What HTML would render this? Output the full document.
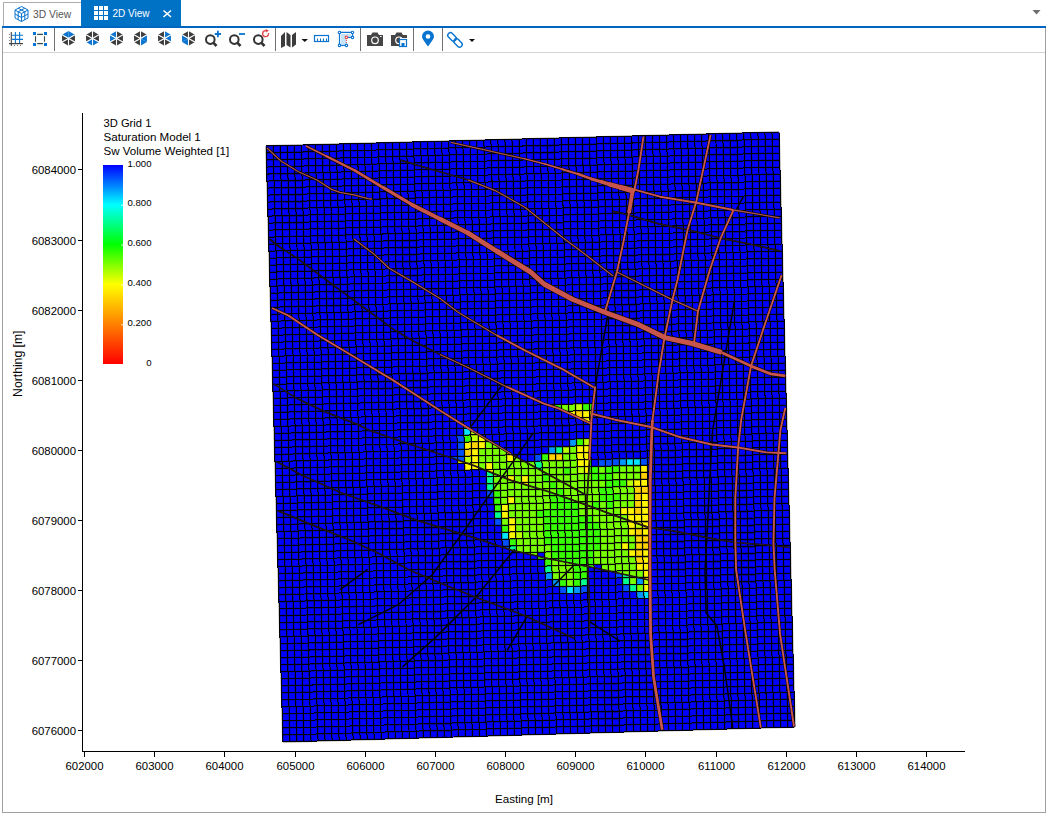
<!DOCTYPE html>
<html><head><meta charset="utf-8"><title>2D View</title>
<style>
html,body{margin:0;padding:0;background:#fff;width:1049px;height:816px;overflow:hidden;font-family:"Liberation Sans",sans-serif;}
svg{display:block}
</style></head><body>
<div style="position:relative;width:1049px;height:816px;">
<svg width="1049" height="816" style="position:absolute;left:0;top:0">
<rect x="2" y="812" width="1044" height="1" fill="#a0a0a0"/>
<rect x="2" y="28" width="1" height="785" fill="#a0a0a0"/>
<rect x="1045" y="28" width="1" height="785" fill="#a0a0a0"/>
<rect x="82" y="113" width="1" height="639" fill="#000"/>
<rect x="82" y="751" width="883" height="1" fill="#000"/>
<rect x="84" y="751" width="1" height="6" fill="#000"/>
<text x="84.5" y="770" font-family="'Liberation Sans',sans-serif" font-size="11.4" fill="#000" text-anchor="middle">602000</text>
<rect x="154" y="751" width="1" height="6" fill="#000"/>
<text x="154.5" y="770" font-family="'Liberation Sans',sans-serif" font-size="11.4" fill="#000" text-anchor="middle">603000</text>
<rect x="224" y="751" width="1" height="6" fill="#000"/>
<text x="224.5" y="770" font-family="'Liberation Sans',sans-serif" font-size="11.4" fill="#000" text-anchor="middle">604000</text>
<rect x="295" y="751" width="1" height="6" fill="#000"/>
<text x="295.5" y="770" font-family="'Liberation Sans',sans-serif" font-size="11.4" fill="#000" text-anchor="middle">605000</text>
<rect x="365" y="751" width="1" height="6" fill="#000"/>
<text x="365.5" y="770" font-family="'Liberation Sans',sans-serif" font-size="11.4" fill="#000" text-anchor="middle">606000</text>
<rect x="435" y="751" width="1" height="6" fill="#000"/>
<text x="435.5" y="770" font-family="'Liberation Sans',sans-serif" font-size="11.4" fill="#000" text-anchor="middle">607000</text>
<rect x="505" y="751" width="1" height="6" fill="#000"/>
<text x="505.5" y="770" font-family="'Liberation Sans',sans-serif" font-size="11.4" fill="#000" text-anchor="middle">608000</text>
<rect x="575" y="751" width="1" height="6" fill="#000"/>
<text x="575.5" y="770" font-family="'Liberation Sans',sans-serif" font-size="11.4" fill="#000" text-anchor="middle">609000</text>
<rect x="645" y="751" width="1" height="6" fill="#000"/>
<text x="645.5" y="770" font-family="'Liberation Sans',sans-serif" font-size="11.4" fill="#000" text-anchor="middle">610000</text>
<rect x="716" y="751" width="1" height="6" fill="#000"/>
<text x="716.5" y="770" font-family="'Liberation Sans',sans-serif" font-size="11.4" fill="#000" text-anchor="middle">611000</text>
<rect x="786" y="751" width="1" height="6" fill="#000"/>
<text x="786.5" y="770" font-family="'Liberation Sans',sans-serif" font-size="11.4" fill="#000" text-anchor="middle">612000</text>
<rect x="856" y="751" width="1" height="6" fill="#000"/>
<text x="856.5" y="770" font-family="'Liberation Sans',sans-serif" font-size="11.4" fill="#000" text-anchor="middle">613000</text>
<rect x="926" y="751" width="1" height="6" fill="#000"/>
<text x="926.5" y="770" font-family="'Liberation Sans',sans-serif" font-size="11.4" fill="#000" text-anchor="middle">614000</text>
<rect x="78" y="730" width="4" height="1" fill="#000"/>
<text x="76" y="734.5" font-family="'Liberation Sans',sans-serif" font-size="11.4" fill="#000" text-anchor="end">6076000</text>
<rect x="78" y="660" width="4" height="1" fill="#000"/>
<text x="76" y="664.5" font-family="'Liberation Sans',sans-serif" font-size="11.4" fill="#000" text-anchor="end">6077000</text>
<rect x="78" y="590" width="4" height="1" fill="#000"/>
<text x="76" y="594.5" font-family="'Liberation Sans',sans-serif" font-size="11.4" fill="#000" text-anchor="end">6078000</text>
<rect x="78" y="520" width="4" height="1" fill="#000"/>
<text x="76" y="524.5" font-family="'Liberation Sans',sans-serif" font-size="11.4" fill="#000" text-anchor="end">6079000</text>
<rect x="78" y="450" width="4" height="1" fill="#000"/>
<text x="76" y="454.5" font-family="'Liberation Sans',sans-serif" font-size="11.4" fill="#000" text-anchor="end">6080000</text>
<rect x="78" y="380" width="4" height="1" fill="#000"/>
<text x="76" y="384.5" font-family="'Liberation Sans',sans-serif" font-size="11.4" fill="#000" text-anchor="end">6081000</text>
<rect x="78" y="310" width="4" height="1" fill="#000"/>
<text x="76" y="314.5" font-family="'Liberation Sans',sans-serif" font-size="11.4" fill="#000" text-anchor="end">6082000</text>
<rect x="78" y="240" width="4" height="1" fill="#000"/>
<text x="76" y="244.5" font-family="'Liberation Sans',sans-serif" font-size="11.4" fill="#000" text-anchor="end">6083000</text>
<rect x="78" y="169" width="4" height="1" fill="#000"/>
<text x="76" y="173.5" font-family="'Liberation Sans',sans-serif" font-size="11.4" fill="#000" text-anchor="end">6084000</text>
<text x="524" y="803" font-family="'Liberation Sans',sans-serif" font-size="11.6" fill="#000" text-anchor="middle">Easting [m]</text>
<text transform="translate(22.3 363.7) rotate(-90)" x="0" y="0" font-family="'Liberation Sans',sans-serif" font-size="12.2" fill="#000" text-anchor="middle">Northing [m]</text>
<text x="103.5" y="126.5" font-family="'Liberation Sans',sans-serif" font-size="11.2" fill="#000">3D Grid 1</text>
<text x="103.5" y="140.7" font-family="'Liberation Sans',sans-serif" font-size="11.6" fill="#000">Saturation Model 1</text>
<text x="103.5" y="154.6" font-family="'Liberation Sans',sans-serif" font-size="11.55" fill="#000">Sw Volume Weighted [1]</text>
<defs><linearGradient id="cb" x1="0" y1="0" x2="0" y2="1"><stop offset="0" stop-color="#0000ff"/><stop offset="0.2" stop-color="#00ffff"/><stop offset="0.4" stop-color="#00ff00"/><stop offset="0.6" stop-color="#ffff00"/><stop offset="0.8" stop-color="#ff8000"/><stop offset="1" stop-color="#ff0000"/></linearGradient></defs>
<rect x="103" y="165" width="20" height="199" fill="url(#cb)"/>
<text x="151.5" y="166.7" font-family="'Liberation Sans',sans-serif" font-size="9.6" fill="#000" text-anchor="end">1.000</text>
<text x="151.5" y="205.7" font-family="'Liberation Sans',sans-serif" font-size="9.6" fill="#000" text-anchor="end">0.800</text>
<text x="151.5" y="245.6" font-family="'Liberation Sans',sans-serif" font-size="9.6" fill="#000" text-anchor="end">0.600</text>
<text x="151.5" y="286.0" font-family="'Liberation Sans',sans-serif" font-size="9.6" fill="#000" text-anchor="end">0.400</text>
<text x="151.5" y="326.1" font-family="'Liberation Sans',sans-serif" font-size="9.6" fill="#000" text-anchor="end">0.200</text>
<text x="151.5" y="365.9" font-family="'Liberation Sans',sans-serif" font-size="9.6" fill="#000" text-anchor="end">0</text>
<rect x="121" y="204.8" width="2" height="1" fill="#fff" opacity="0.8"/>
<rect x="121" y="244.6" width="2" height="1" fill="#fff" opacity="0.8"/>
<rect x="121" y="284.4" width="2" height="1" fill="#fff" opacity="0.8"/>
<rect x="121" y="324.2" width="2" height="1" fill="#fff" opacity="0.8"/>
</svg>
<svg width="1049" height="816" style="position:absolute;left:0;top:0">
<polygon points="266.0,146.0 779.0,132.0 795.0,727.0 283.0,742.0" fill="#0000ff"/>
<defs><clipPath id="vl"><polygon points="200.0,250.0 200.0,252.0 200.0,254.0 200.0,256.0 200.0,258.0 200.0,260.0 200.0,262.0 200.0,264.0 200.0,266.0 200.0,268.0 200.0,270.0 200.0,272.0 200.0,274.0 200.0,276.0 200.0,278.0 200.0,280.0 200.0,282.0 200.0,284.0 200.0,286.0 200.0,288.0 200.0,290.0 200.0,292.0 200.0,294.0 200.0,296.0 200.0,298.0 200.0,300.0 200.0,302.0 200.0,304.0 200.0,306.0 200.0,308.0 200.0,310.0 200.0,312.0 200.0,314.0 200.0,316.0 200.0,318.0 200.0,320.0 200.0,322.0 200.0,324.0 200.0,326.0 200.0,328.0 200.0,330.0 200.0,332.0 200.0,334.0 200.0,336.0 200.0,338.0 200.0,340.0 200.0,342.0 200.0,344.0 200.0,346.0 200.0,348.0 200.0,350.0 200.0,352.0 200.0,354.0 200.0,356.0 200.0,358.0 200.0,360.0 200.0,362.0 200.0,364.0 200.0,366.0 200.0,368.0 200.0,370.0 200.0,372.0 200.0,374.0 200.0,376.0 200.0,378.0 200.0,380.0 200.0,382.0 200.0,384.0 200.0,386.0 200.0,388.0 200.0,390.0 200.0,392.0 200.0,394.0 200.0,396.0 200.0,398.0 200.0,400.0 200.0,402.0 200.0,404.0 200.0,406.0 200.0,408.0 200.0,410.0 200.0,412.0 200.0,414.0 200.0,416.0 200.0,418.0 200.0,420.0 200.0,422.0 200.0,424.0 200.0,426.0 200.0,428.0 200.0,430.0 200.0,432.0 200.0,434.0 200.0,436.0 200.0,438.0 200.0,440.0 200.0,442.0 200.0,444.0 200.0,446.0 200.0,448.0 200.0,450.0 200.0,452.0 200.0,454.0 200.0,456.0 200.0,458.0 200.0,460.0 200.0,462.0 200.0,464.0 200.0,466.0 200.0,468.0 200.0,470.0 200.0,472.0 200.0,474.0 200.0,476.0 200.0,478.0 200.0,480.0 200.0,482.0 200.0,484.0 200.0,486.0 200.0,488.0 200.0,490.0 200.0,492.0 200.0,494.0 200.0,496.0 200.0,498.0 200.0,500.0 200.0,502.0 200.0,504.0 200.0,506.0 200.0,508.0 200.0,510.0 200.0,512.0 200.0,514.0 200.0,516.0 200.0,518.0 200.0,520.0 200.0,522.0 200.0,524.0 200.0,526.0 200.0,528.0 200.0,530.0 200.0,532.0 200.0,534.0 200.0,536.0 200.0,538.0 200.0,540.0 200.0,542.0 200.0,544.0 200.0,546.0 200.0,548.0 200.0,550.0 200.0,552.0 200.0,554.0 200.0,556.0 200.0,558.0 200.0,560.0 200.0,562.0 200.0,564.0 200.0,566.0 200.0,568.0 200.0,570.0 200.0,572.0 200.0,574.0 200.0,576.0 200.0,578.0 200.0,580.0 200.0,582.0 200.0,584.0 200.0,586.0 200.0,588.0 200.0,590.0 200.0,592.0 200.0,594.0 200.0,596.0 200.0,598.0 200.0,600.0 200.0,602.0 200.0,604.0 200.0,606.0 200.0,608.0 200.0,610.0 200.0,612.0 200.0,614.0 200.0,616.0 200.0,618.0 200.0,620.0 200.0,622.0 200.0,624.0 200.0,626.0 200.0,628.0 200.0,630.0 200.0,632.0 200.0,634.0 200.0,636.0 200.0,638.0 200.0,640.0 200.0,642.0 200.0,644.0 200.0,646.0 200.0,648.0 200.0,650.0 200.0,652.0 200.0,654.0 200.0,656.0 200.0,658.0 200.0,660.0 200.0,662.0 200.0,664.0 200.0,666.0 200.0,668.0 200.0,670.0 200.0,672.0 200.0,674.0 200.0,676.0 200.0,678.0 200.0,680.0 200.0,682.0 200.0,684.0 200.0,686.0 200.0,688.0 200.0,690.0 200.0,692.0 200.0,694.0 200.0,696.0 200.0,698.0 200.0,700.0 589.4,700.0 589.4,698.0 589.4,696.0 589.4,694.0 589.4,692.0 589.4,690.0 589.4,688.0 589.4,686.0 589.4,684.0 589.4,682.0 589.4,680.0 589.4,678.0 589.4,676.0 589.4,674.0 589.4,672.0 589.4,670.0 589.4,668.0 589.4,666.0 589.4,664.0 589.4,662.0 589.4,660.0 589.4,658.0 589.4,656.0 589.4,654.0 589.4,652.0 589.4,650.0 589.4,648.0 589.4,646.0 589.4,644.0 589.4,642.0 589.4,640.0 589.4,638.0 589.4,636.0 589.4,634.0 589.4,632.0 589.4,630.0 589.4,628.0 589.4,626.0 589.4,624.0 589.4,622.0 589.4,620.0 589.4,618.0 589.4,616.0 589.4,614.0 589.4,612.0 589.4,610.0 589.4,608.0 589.4,606.0 589.4,604.0 589.4,602.0 589.4,600.0 589.3,598.0 589.2,596.0 589.1,594.0 589.0,592.0 588.9,590.0 588.8,588.0 588.7,586.0 588.6,584.0 588.5,582.0 588.4,580.0 588.3,578.0 588.2,576.0 588.2,574.0 588.1,572.0 588.0,570.0 587.9,568.0 587.8,566.0 587.7,564.0 587.6,562.0 587.5,560.0 587.4,558.0 587.3,556.0 587.2,554.0 587.1,552.0 587.0,550.0 587.0,548.0 587.0,546.0 587.0,544.0 587.0,542.0 587.0,540.0 587.0,538.0 587.0,536.0 587.0,534.0 587.0,532.0 587.0,530.0 587.0,528.0 587.0,526.0 586.9,524.0 586.9,522.0 586.9,520.0 586.9,518.0 586.9,516.0 586.9,514.0 586.9,512.0 586.9,510.0 586.9,508.0 586.9,506.0 586.9,504.0 586.9,502.0 587.0,500.0 587.1,498.0 587.2,496.0 587.4,494.0 587.5,492.0 587.6,490.0 587.7,488.0 587.9,486.0 588.0,484.0 588.1,482.0 588.2,480.0 588.4,478.0 588.5,476.0 588.6,474.0 588.7,472.0 588.8,470.0 588.9,468.0 589.1,466.0 589.2,464.0 589.3,462.0 589.4,460.0 589.5,458.0 589.6,456.0 589.7,454.0 589.8,452.0 589.9,450.0 590.0,448.0 590.1,446.0 590.2,444.0 590.3,442.0 590.4,440.0 590.5,438.0 590.6,436.0 590.7,434.0 590.8,432.0 590.9,430.0 591.0,428.0 591.1,426.0 591.2,424.0 591.3,422.0 591.4,420.0 591.6,418.0 591.9,416.0 592.1,414.0 592.3,412.0 592.5,410.0 592.8,408.0 593.0,406.0 593.2,404.0 593.4,402.0 593.7,400.0 593.9,398.0 594.1,396.0 594.3,394.0 594.6,392.0 594.8,390.0 595.0,388.0 595.3,386.0 595.6,384.0 596.0,382.0 596.3,380.0 596.7,378.0 597.0,376.0 597.4,374.0 597.7,372.0 598.1,370.0 598.4,368.0 598.8,366.0 599.1,364.0 599.5,362.0 599.8,360.0 600.2,358.0 600.5,356.0 600.9,354.0 601.2,352.0 601.6,350.0 601.9,348.0 602.3,346.0 602.6,344.0 603.0,342.0 603.3,340.0 603.7,338.0 604.0,336.0 604.4,334.0 604.8,332.0 605.1,330.0 605.5,328.0 605.8,326.0 606.2,324.0 606.5,322.0 606.9,320.0 607.2,318.0 607.6,316.0 607.9,314.0 608.3,312.0 608.6,310.0 609.0,308.0 609.3,306.0 609.7,304.0 610.0,302.0 610.4,300.0 610.7,298.0 611.1,296.0 611.4,294.0 611.8,292.0 612.1,290.0 612.5,288.0 612.8,286.0 613.2,284.0 613.5,282.0 613.9,280.0 614.2,278.0 614.6,276.0 614.9,274.0 615.3,272.0 615.6,270.0 616.0,268.0 616.3,266.0 616.7,264.0 617.0,262.0 617.4,260.0 617.7,258.0 618.1,256.0 618.4,254.0 618.8,252.0 619.1,250.0"/></clipPath><clipPath id="vr"><polygon points="619.1,250.0 618.8,252.0 618.4,254.0 618.1,256.0 617.7,258.0 617.4,260.0 617.0,262.0 616.7,264.0 616.3,266.0 616.0,268.0 615.6,270.0 615.3,272.0 614.9,274.0 614.6,276.0 614.2,278.0 613.9,280.0 613.5,282.0 613.2,284.0 612.8,286.0 612.5,288.0 612.1,290.0 611.8,292.0 611.4,294.0 611.1,296.0 610.7,298.0 610.4,300.0 610.0,302.0 609.7,304.0 609.3,306.0 609.0,308.0 608.6,310.0 608.3,312.0 607.9,314.0 607.6,316.0 607.2,318.0 606.9,320.0 606.5,322.0 606.2,324.0 605.8,326.0 605.5,328.0 605.1,330.0 604.8,332.0 604.4,334.0 604.0,336.0 603.7,338.0 603.3,340.0 603.0,342.0 602.6,344.0 602.3,346.0 601.9,348.0 601.6,350.0 601.2,352.0 600.9,354.0 600.5,356.0 600.2,358.0 599.8,360.0 599.5,362.0 599.1,364.0 598.8,366.0 598.4,368.0 598.1,370.0 597.7,372.0 597.4,374.0 597.0,376.0 596.7,378.0 596.3,380.0 596.0,382.0 595.6,384.0 595.3,386.0 595.0,388.0 594.8,390.0 594.6,392.0 594.3,394.0 594.1,396.0 593.9,398.0 593.7,400.0 593.4,402.0 593.2,404.0 593.0,406.0 592.8,408.0 592.5,410.0 592.3,412.0 592.1,414.0 591.9,416.0 591.6,418.0 591.4,420.0 591.3,422.0 591.2,424.0 591.1,426.0 591.0,428.0 590.9,430.0 590.8,432.0 590.7,434.0 590.6,436.0 590.5,438.0 590.4,440.0 590.3,442.0 590.2,444.0 590.1,446.0 590.0,448.0 589.9,450.0 589.8,452.0 589.7,454.0 589.6,456.0 589.5,458.0 589.4,460.0 589.3,462.0 589.2,464.0 589.1,466.0 588.9,468.0 588.8,470.0 588.7,472.0 588.6,474.0 588.5,476.0 588.4,478.0 588.2,480.0 588.1,482.0 588.0,484.0 587.9,486.0 587.7,488.0 587.6,490.0 587.5,492.0 587.4,494.0 587.2,496.0 587.1,498.0 587.0,500.0 586.9,502.0 586.9,504.0 586.9,506.0 586.9,508.0 586.9,510.0 586.9,512.0 586.9,514.0 586.9,516.0 586.9,518.0 586.9,520.0 586.9,522.0 586.9,524.0 587.0,526.0 587.0,528.0 587.0,530.0 587.0,532.0 587.0,534.0 587.0,536.0 587.0,538.0 587.0,540.0 587.0,542.0 587.0,544.0 587.0,546.0 587.0,548.0 587.0,550.0 587.1,552.0 587.2,554.0 587.3,556.0 587.4,558.0 587.5,560.0 587.6,562.0 587.7,564.0 587.8,566.0 587.9,568.0 588.0,570.0 588.1,572.0 588.2,574.0 588.2,576.0 588.3,578.0 588.4,580.0 588.5,582.0 588.6,584.0 588.7,586.0 588.8,588.0 588.9,590.0 589.0,592.0 589.1,594.0 589.2,596.0 589.3,598.0 589.4,600.0 589.4,602.0 589.4,604.0 589.4,606.0 589.4,608.0 589.4,610.0 589.4,612.0 589.4,614.0 589.4,616.0 589.4,618.0 589.4,620.0 589.4,622.0 589.4,624.0 589.4,626.0 589.4,628.0 589.4,630.0 589.4,632.0 589.4,634.0 589.4,636.0 589.4,638.0 589.4,640.0 589.4,642.0 589.4,644.0 589.4,646.0 589.4,648.0 589.4,650.0 589.4,652.0 589.4,654.0 589.4,656.0 589.4,658.0 589.4,660.0 589.4,662.0 589.4,664.0 589.4,666.0 589.4,668.0 589.4,670.0 589.4,672.0 589.4,674.0 589.4,676.0 589.4,678.0 589.4,680.0 589.4,682.0 589.4,684.0 589.4,686.0 589.4,688.0 589.4,690.0 589.4,692.0 589.4,694.0 589.4,696.0 589.4,698.0 589.4,700.0 651.2,700.0 651.2,698.0 651.2,696.0 651.2,694.0 651.1,692.0 651.1,690.0 651.1,688.0 651.1,686.0 651.1,684.0 651.0,682.0 651.0,680.0 651.0,678.0 651.0,676.0 651.0,674.0 651.0,672.0 650.9,670.0 650.9,668.0 650.9,666.0 650.9,664.0 650.9,662.0 650.8,660.0 650.8,658.0 650.8,656.0 650.8,654.0 650.8,652.0 650.7,650.0 650.7,648.0 650.7,646.0 650.7,644.0 650.7,642.0 650.7,640.0 650.6,638.0 650.6,636.0 650.6,634.0 650.6,632.0 650.6,630.0 650.5,628.0 650.5,626.0 650.5,624.0 650.5,622.0 650.5,620.0 650.4,618.0 650.4,616.0 650.4,614.0 650.4,612.0 650.4,610.0 650.4,608.0 650.3,606.0 650.3,604.0 650.3,602.0 650.3,600.0 650.3,598.0 650.2,596.0 650.2,594.0 650.2,592.0 650.2,590.0 650.2,588.0 650.1,586.0 650.1,584.0 650.1,582.0 650.1,580.0 650.1,578.0 650.1,576.0 650.0,574.0 650.0,572.0 650.0,570.0 650.0,568.0 650.0,566.0 650.0,564.0 650.0,562.0 650.0,560.0 650.0,558.0 650.0,556.0 650.0,554.0 650.0,552.0 650.0,550.0 650.0,548.0 650.0,546.0 650.0,544.0 650.0,542.0 650.0,540.0 650.0,538.0 650.0,536.0 650.0,534.0 650.0,532.0 650.0,530.0 650.0,528.0 650.0,526.0 650.0,524.0 650.0,522.0 650.0,520.0 650.1,518.0 650.1,516.0 650.1,514.0 650.1,512.0 650.1,510.0 650.1,508.0 650.1,506.0 650.1,504.0 650.2,502.0 650.2,500.0 650.2,498.0 650.2,496.0 650.2,494.0 650.2,492.0 650.2,490.0 650.2,488.0 650.3,486.0 650.3,484.0 650.3,482.0 650.3,480.0 650.3,478.0 650.4,476.0 650.5,474.0 650.5,472.0 650.6,470.0 650.6,468.0 650.7,466.0 650.8,464.0 650.8,462.0 650.9,460.0 651.0,458.0 651.0,456.0 651.1,454.0 651.2,452.0 651.2,450.0 651.3,448.0 651.3,446.0 651.4,444.0 651.5,442.0 651.5,440.0 651.6,438.0 651.7,436.0 651.7,434.0 651.8,432.0 651.9,430.0 652.0,428.0 652.1,426.0 652.3,424.0 652.4,422.0 652.5,420.0 652.8,418.0 653.0,416.0 653.3,414.0 653.5,412.0 653.8,410.0 654.1,408.0 654.3,406.0 654.6,404.0 654.9,402.0 655.1,400.0 655.4,398.0 655.6,396.0 655.9,394.0 656.2,392.0 656.4,390.0 656.7,388.0 657.0,386.0 657.2,384.0 657.5,382.0 657.8,380.0 658.0,378.0 658.3,376.0 658.5,374.0 658.8,372.0 659.1,370.0 659.5,368.0 659.8,366.0 660.1,364.0 660.5,362.0 660.8,360.0 661.1,358.0 661.5,356.0 661.8,354.0 662.1,352.0 662.5,350.0 662.8,348.0 663.1,346.0 663.5,344.0 663.8,342.0 664.1,340.0 664.5,338.0 664.8,336.0 665.3,334.0 665.7,332.0 666.1,330.0 666.5,328.0 666.9,326.0 667.4,324.0 667.8,322.0 668.2,320.0 668.6,318.0 669.0,316.0 669.4,314.0 669.9,312.0 670.3,310.0 670.7,308.0 671.1,306.0 671.5,304.0 672.0,302.0 672.4,300.0 672.9,298.0 673.4,296.0 673.9,294.0 674.4,292.0 674.9,290.0 675.4,288.0 676.0,286.0 676.5,284.0 677.0,282.0 677.5,280.0 678.0,278.0 678.5,276.0 679.0,274.0 679.6,272.0 680.1,270.0 680.6,268.0 681.1,266.0 681.6,264.0 682.1,262.0 682.7,260.0 683.2,258.0 683.7,256.0 684.2,254.0 684.7,252.0 685.2,250.0"/></clipPath>
<clipPath id="b8"><polygon points="380.0,259.8 382.0,261.7 384.0,263.5 386.0,265.4 388.0,267.3 390.0,268.8 392.0,270.0 394.0,271.1 396.0,272.3 398.0,273.4 400.0,274.6 402.0,275.7 404.0,276.9 406.0,278.0 408.0,279.2 410.0,280.3 412.0,281.5 414.0,282.7 416.0,283.9 418.0,285.1 420.0,286.3 422.0,287.5 424.0,288.8 426.0,290.0 428.0,291.2 430.0,292.4 432.0,293.6 434.0,294.8 436.0,296.1 438.0,297.3 440.0,298.5 442.0,300.0 444.0,301.5 446.0,303.0 448.0,304.6 450.0,306.1 452.0,307.6 454.0,309.1 456.0,310.6 458.0,312.1 460.0,313.4 462.0,314.6 464.0,315.8 466.0,317.0 468.0,318.2 470.0,319.4 472.0,320.6 474.0,321.8 476.0,323.0 478.0,324.1 480.0,325.3 482.0,326.5 484.0,327.7 486.0,328.9 488.0,330.1 490.0,331.3 492.0,332.5 494.0,333.7 496.0,334.9 498.0,336.0 500.0,337.1 502.0,338.1 504.0,339.2 506.0,340.3 508.0,341.4 510.0,342.4 512.0,343.5 514.0,344.6 516.0,345.6 518.0,346.7 520.0,347.8 522.0,348.8 524.0,349.9 526.0,350.9 528.0,351.9 530.0,352.9 532.0,353.9 534.0,354.9 536.0,355.9 538.0,356.9 540.0,357.9 542.0,358.9 544.0,359.9 546.0,360.9 548.0,361.9 550.0,362.9 552.0,363.9 554.0,364.9 556.0,365.9 558.0,366.9 560.0,367.9 562.0,368.9 564.0,370.0 566.0,371.2 568.0,372.3 570.0,373.5 572.0,374.7 574.0,375.8 576.0,377.0 578.0,378.1 580.0,379.3 582.0,380.4 584.0,381.6 586.0,382.8 588.0,383.9 590.0,385.1 592.0,386.2 594.0,387.4 596.0,388.5 598.0,389.7 600.0,390.9 602.0,392.0 604.0,393.2 606.0,394.3 608.0,395.5 610.0,396.6 612.0,397.8 614.0,398.9 616.0,400.1 618.0,401.3 620.0,402.4 622.0,403.6 624.0,404.7 626.0,405.9 628.0,407.0 630.0,408.2 632.0,409.4 634.0,410.5 636.0,411.7 638.0,412.8 640.0,414.0 642.0,415.1 644.0,416.3 646.0,417.5 648.0,418.6 650.0,419.8 652.0,420.9 654.0,422.1 656.0,423.2 658.0,424.4 660.0,425.6 662.0,426.7 664.0,427.9 666.0,429.0 668.0,430.2 670.0,431.3 672.0,432.5 674.0,433.6 676.0,434.8 678.0,436.0 680.0,437.1 682.0,438.3 684.0,439.4 686.0,440.6 688.0,441.7 690.0,442.9 692.0,444.1 694.0,445.2 696.0,446.4 698.0,447.5 700.0,448.7 700.0,474.9 698.0,474.0 696.0,473.1 694.0,472.1 692.0,471.2 690.0,470.2 688.0,469.3 686.0,468.3 684.0,467.4 682.0,466.5 680.0,465.5 678.0,464.6 676.0,463.6 674.0,462.7 672.0,461.8 670.0,460.8 668.0,459.9 666.0,458.9 664.0,458.0 662.0,457.1 660.0,456.1 658.0,455.2 656.0,454.2 654.0,453.3 652.0,452.3 650.0,451.4 648.0,450.5 646.0,449.5 644.0,448.6 642.0,447.6 640.0,446.7 638.0,445.8 636.0,444.8 634.0,443.9 632.0,442.9 630.0,442.0 628.0,441.1 626.0,440.1 624.0,439.2 622.0,438.2 620.0,437.3 618.0,436.3 616.0,435.4 614.0,434.5 612.0,433.5 610.0,432.6 608.0,431.6 606.0,430.7 604.0,429.8 602.0,428.8 600.0,427.9 598.0,426.9 596.0,426.0 594.0,425.1 592.0,424.1 590.0,423.2 588.0,422.2 586.0,421.3 584.0,420.3 582.0,419.4 580.0,418.5 578.0,417.5 576.0,416.6 574.0,415.6 572.0,414.7 570.0,413.8 568.0,412.8 566.0,411.9 564.0,410.9 562.0,410.0 560.0,409.1 558.0,408.2 556.0,407.5 554.0,406.9 552.0,406.2 550.0,405.6 548.0,404.9 546.0,404.3 544.0,403.6 542.0,402.7 540.0,401.8 538.0,400.9 536.0,400.0 534.0,399.1 532.0,398.2 530.0,397.3 528.0,396.4 526.0,395.5 524.0,394.6 522.0,393.7 520.0,392.8 518.0,391.9 516.0,391.0 514.0,390.1 512.0,389.2 510.0,388.3 508.0,387.4 506.0,386.5 504.0,385.5 502.0,384.5 500.0,383.5 498.0,382.5 496.0,381.5 494.0,380.5 492.0,379.5 490.0,378.5 488.0,377.5 486.0,376.5 484.0,375.5 482.0,374.5 480.0,373.5 478.0,372.5 476.0,371.5 474.0,370.5 472.0,369.5 470.0,368.5 468.0,367.5 466.0,366.6 464.0,365.6 462.0,364.7 460.0,363.8 458.0,362.9 456.0,361.9 454.0,361.0 452.0,360.1 450.0,359.1 448.0,358.2 446.0,357.3 444.0,356.4 442.0,355.4 440.0,354.5 438.0,353.6 436.0,352.6 434.0,351.7 432.0,350.8 430.0,349.9 428.0,348.9 426.0,348.0 424.0,347.1 422.0,346.1 420.0,345.2 418.0,344.3 416.0,343.4 414.0,342.4 412.0,341.5 410.0,340.6 408.0,339.6 406.0,338.7 404.0,337.8 402.0,336.9 400.0,335.9 398.0,335.0 396.0,334.1 394.0,333.1 392.0,332.2 390.0,331.3 388.0,330.4 386.0,329.4 384.0,328.5 382.0,327.6 380.0,326.6"/></clipPath>
<clipPath id="b2"><polygon points="380.0,326.6 382.0,327.6 384.0,328.5 386.0,329.4 388.0,330.4 390.0,331.3 392.0,332.2 394.0,333.1 396.0,334.1 398.0,335.0 400.0,335.9 402.0,336.9 404.0,337.8 406.0,338.7 408.0,339.6 410.0,340.6 412.0,341.5 414.0,342.4 416.0,343.4 418.0,344.3 420.0,345.2 422.0,346.1 424.0,347.1 426.0,348.0 428.0,348.9 430.0,349.9 432.0,350.8 434.0,351.7 436.0,352.6 438.0,353.6 440.0,354.5 442.0,355.4 444.0,356.4 446.0,357.3 448.0,358.2 450.0,359.1 452.0,360.1 454.0,361.0 456.0,361.9 458.0,362.9 460.0,363.8 462.0,364.7 464.0,365.6 466.0,366.6 468.0,367.5 470.0,368.5 472.0,369.5 474.0,370.5 476.0,371.5 478.0,372.5 480.0,373.5 482.0,374.5 484.0,375.5 486.0,376.5 488.0,377.5 490.0,378.5 492.0,379.5 494.0,380.5 496.0,381.5 498.0,382.5 500.0,383.5 502.0,384.5 504.0,385.5 506.0,386.5 508.0,387.4 510.0,388.3 512.0,389.2 514.0,390.1 516.0,391.0 518.0,391.9 520.0,392.8 522.0,393.7 524.0,394.6 526.0,395.5 528.0,396.4 530.0,397.3 532.0,398.2 534.0,399.1 536.0,400.0 538.0,400.9 540.0,401.8 542.0,402.7 544.0,403.6 546.0,404.3 548.0,404.9 550.0,405.6 552.0,406.2 554.0,406.9 556.0,407.5 558.0,408.2 560.0,409.1 562.0,410.0 564.0,410.9 566.0,411.9 568.0,412.8 570.0,413.8 572.0,414.7 574.0,415.6 576.0,416.6 578.0,417.5 580.0,418.5 582.0,419.4 584.0,420.3 586.0,421.3 588.0,422.2 590.0,423.2 592.0,424.1 594.0,425.1 596.0,426.0 598.0,426.9 600.0,427.9 602.0,428.8 604.0,429.8 606.0,430.7 608.0,431.6 610.0,432.6 612.0,433.5 614.0,434.5 616.0,435.4 618.0,436.3 620.0,437.3 622.0,438.2 624.0,439.2 626.0,440.1 628.0,441.1 630.0,442.0 632.0,442.9 634.0,443.9 636.0,444.8 638.0,445.8 640.0,446.7 642.0,447.6 644.0,448.6 646.0,449.5 648.0,450.5 650.0,451.4 652.0,452.3 654.0,453.3 656.0,454.2 658.0,455.2 660.0,456.1 662.0,457.1 664.0,458.0 666.0,458.9 668.0,459.9 670.0,460.8 672.0,461.8 674.0,462.7 676.0,463.6 678.0,464.6 680.0,465.5 682.0,466.5 684.0,467.4 686.0,468.3 688.0,469.3 690.0,470.2 692.0,471.2 694.0,472.1 696.0,473.1 698.0,474.0 700.0,474.9 700.0,557.8 698.0,556.7 696.0,555.6 694.0,554.5 692.0,553.4 690.0,552.3 688.0,551.2 686.0,550.1 684.0,549.0 682.0,547.9 680.0,546.8 678.0,545.7 676.0,544.6 674.0,543.5 672.0,542.4 670.0,541.3 668.0,540.2 666.0,539.1 664.0,538.0 662.0,536.9 660.0,535.8 658.0,534.7 656.0,533.6 654.0,532.5 652.0,531.4 650.0,530.3 648.0,529.2 646.0,528.1 644.0,527.0 642.0,525.9 640.0,524.8 638.0,523.7 636.0,522.6 634.0,521.5 632.0,520.4 630.0,519.3 628.0,518.2 626.0,517.1 624.0,516.0 622.0,514.9 620.0,513.8 618.0,512.7 616.0,511.6 614.0,510.5 612.0,509.4 610.0,508.3 608.0,507.2 606.0,506.1 604.0,505.0 602.0,503.9 600.0,502.8 598.0,501.7 596.0,500.6 594.0,499.5 592.0,498.4 590.0,497.3 588.0,496.2 586.0,495.1 584.0,494.0 582.0,492.9 580.0,491.8 578.0,490.7 576.0,489.6 574.0,488.5 572.0,487.4 570.0,486.3 568.0,485.2 566.0,484.1 564.0,483.0 562.0,481.9 560.0,480.8 558.0,479.7 556.0,478.6 554.0,477.5 552.0,476.4 550.0,475.3 548.0,474.2 546.0,473.1 544.0,472.0 542.0,470.9 540.0,469.8 538.0,468.7 536.0,467.6 534.0,466.5 532.0,465.4 530.0,464.3 528.0,463.2 526.0,462.1 524.0,461.0 522.0,459.9 520.0,458.8 518.0,457.7 516.0,456.6 514.0,455.5 512.0,454.4 510.0,453.3 508.0,452.1 506.0,450.9 504.0,449.7 502.0,448.5 500.0,447.3 498.0,446.1 496.0,444.9 494.0,443.7 492.0,442.5 490.0,441.3 488.0,440.1 486.0,438.9 484.0,437.7 482.0,436.5 480.0,435.3 478.0,434.1 476.0,432.9 474.0,431.7 472.0,430.5 470.0,429.2 468.0,428.0 466.0,426.7 464.0,425.5 462.0,424.2 460.0,423.0 458.0,421.7 456.0,420.5 454.0,419.2 452.0,418.0 450.0,416.7 448.0,415.5 446.0,414.2 444.0,413.0 442.0,411.7 440.0,410.5 438.0,409.2 436.0,407.9 434.0,406.6 432.0,405.3 430.0,404.0 428.0,402.8 426.0,401.5 424.0,400.2 422.0,398.9 420.0,397.6 418.0,396.3 416.0,395.0 414.0,393.7 412.0,392.4 410.0,391.1 408.0,389.8 406.0,388.6 404.0,387.3 402.0,386.0 400.0,384.7 398.0,383.4 396.0,382.1 394.0,380.8 392.0,379.6 390.0,378.4 388.0,377.2 386.0,376.0 384.0,374.8 382.0,373.6 380.0,372.4"/></clipPath>
<clipPath id="b1"><polygon points="262.0,303.5 264.0,304.5 266.0,305.4 268.0,306.3 270.0,307.2 272.0,308.1 274.0,309.0 276.0,309.9 278.0,310.8 280.0,311.7 282.0,312.6 284.0,313.6 286.0,314.5 288.0,315.4 290.0,316.6 292.0,317.9 294.0,319.3 296.0,320.6 298.0,321.9 300.0,323.3 302.0,324.6 304.0,325.9 306.0,327.3 308.0,328.6 310.0,329.9 312.0,331.3 314.0,332.6 316.0,333.9 318.0,335.2 320.0,336.4 322.0,337.6 324.0,338.8 326.0,340.0 328.0,341.2 330.0,342.4 332.0,343.6 334.0,344.8 336.0,346.0 338.0,347.2 340.0,348.4 342.0,349.6 344.0,350.8 346.0,352.0 348.0,353.2 350.0,354.4 352.0,355.6 354.0,356.8 356.0,358.0 358.0,359.2 360.0,360.4 362.0,361.6 364.0,362.8 366.0,364.0 368.0,365.2 370.0,366.4 372.0,367.6 374.0,368.8 376.0,370.0 378.0,371.2 380.0,372.4 382.0,373.6 384.0,374.8 386.0,376.0 388.0,377.2 390.0,378.4 392.0,379.6 394.0,380.8 396.0,382.1 398.0,383.4 400.0,384.7 402.0,386.0 404.0,387.3 406.0,388.6 408.0,389.8 410.0,391.1 412.0,392.4 414.0,393.7 416.0,395.0 418.0,396.3 420.0,397.6 422.0,398.9 424.0,400.2 426.0,401.5 428.0,402.8 430.0,404.0 432.0,405.3 434.0,406.6 436.0,407.9 438.0,409.2 440.0,410.5 442.0,411.7 444.0,413.0 446.0,414.2 448.0,415.5 450.0,416.7 452.0,418.0 454.0,419.2 456.0,420.5 458.0,421.7 460.0,423.0 462.0,424.2 464.0,425.5 466.0,426.7 468.0,428.0 470.0,429.2 472.0,430.5 474.0,431.7 476.0,432.9 478.0,434.1 480.0,435.3 482.0,436.5 484.0,437.7 486.0,438.9 488.0,440.1 490.0,441.3 492.0,442.5 494.0,443.7 496.0,444.9 498.0,446.1 500.0,447.3 502.0,448.5 504.0,449.7 506.0,450.9 508.0,452.1 510.0,453.3 512.0,454.4 514.0,455.5 516.0,456.6 518.0,457.7 520.0,458.8 522.0,459.9 524.0,461.0 526.0,462.1 528.0,463.2 530.0,464.3 532.0,465.4 534.0,466.5 536.0,467.6 538.0,468.7 540.0,469.8 542.0,470.9 544.0,472.0 546.0,473.1 548.0,474.2 550.0,475.3 552.0,476.4 554.0,477.5 556.0,478.6 558.0,479.7 560.0,480.8 562.0,481.9 564.0,483.0 566.0,484.1 568.0,485.2 570.0,486.3 572.0,487.4 574.0,488.5 576.0,489.6 578.0,490.7 580.0,491.8 582.0,492.9 584.0,494.0 586.0,495.1 588.0,496.2 590.0,497.3 592.0,498.4 594.0,499.5 596.0,500.6 598.0,501.7 600.0,502.8 602.0,503.9 604.0,505.0 606.0,506.1 608.0,507.2 610.0,508.3 612.0,509.4 614.0,510.5 616.0,511.6 618.0,512.7 620.0,513.8 622.0,514.9 624.0,516.0 626.0,517.1 628.0,518.2 630.0,519.3 632.0,520.4 634.0,521.5 636.0,522.6 638.0,523.7 640.0,524.8 642.0,525.9 644.0,527.0 646.0,528.1 648.0,529.2 650.0,530.3 652.0,531.4 654.0,532.5 656.0,533.6 658.0,534.7 660.0,535.8 662.0,536.9 664.0,538.0 666.0,539.1 668.0,540.2 670.0,541.3 672.0,542.4 674.0,543.5 676.0,544.6 678.0,545.7 680.0,546.8 682.0,547.9 684.0,549.0 686.0,550.1 688.0,551.2 690.0,552.3 692.0,553.4 694.0,554.5 696.0,555.6 698.0,556.7 700.0,557.8 700.0,535.2 698.0,534.9 696.0,534.5 694.0,534.2 692.0,533.9 690.0,533.6 688.0,533.3 686.0,533.0 684.0,532.7 682.0,532.4 680.0,532.0 678.0,531.7 676.0,531.4 674.0,531.1 672.0,530.8 670.0,530.5 668.0,530.2 666.0,529.9 664.0,529.6 662.0,529.2 660.0,528.9 658.0,528.6 656.0,528.3 654.0,528.0 652.0,527.7 650.0,527.4 648.0,527.1 646.0,526.5 644.0,525.8 642.0,525.1 640.0,524.4 638.0,523.7 636.0,523.0 634.0,522.3 632.0,521.6 630.0,520.9 628.0,520.2 626.0,519.5 624.0,518.8 622.0,518.1 620.0,517.4 618.0,516.7 616.0,516.0 614.0,515.2 612.0,514.5 610.0,513.7 608.0,513.0 606.0,512.2 604.0,511.5 602.0,510.7 600.0,510.0 598.0,509.2 596.0,508.5 594.0,507.8 592.0,507.0 590.0,506.3 588.0,505.5 586.0,504.8 584.0,504.1 582.0,503.4 580.0,502.7 578.0,502.0 576.0,501.3 574.0,500.6 572.0,499.9 570.0,499.2 568.0,498.5 566.0,497.8 564.0,497.1 562.0,496.4 560.0,495.7 558.0,495.0 556.0,494.3 554.0,493.6 552.0,492.9 550.0,492.2 548.0,491.5 546.0,490.9 544.0,490.3 542.0,489.7 540.0,489.1 538.0,488.5 536.0,487.9 534.0,487.3 532.0,486.7 530.0,486.1 528.0,485.5 526.0,484.9 524.0,484.3 522.0,483.7 520.0,483.1 518.0,482.5 516.0,481.9 514.0,481.3 512.0,480.7 510.0,480.0 508.0,479.2 506.0,478.4 504.0,477.6 502.0,476.8 500.0,476.0 498.0,475.2 496.0,474.4 494.0,473.6 492.0,472.8 490.0,472.0 488.0,471.2 486.0,470.4 484.0,469.6 482.0,468.8 480.0,468.0 478.0,467.2 476.0,466.4 474.0,465.6 472.0,464.9 470.0,464.2 468.0,463.5 466.0,462.9 464.0,462.2 462.0,461.5 460.0,460.8 458.0,460.2 456.0,459.5 454.0,458.8 452.0,458.1 450.0,457.5 448.0,456.8 446.0,456.1 444.0,455.5 442.0,454.8 440.0,454.2 438.0,453.5 436.0,452.9 434.0,452.2 432.0,451.5 430.0,450.9 428.0,450.2 426.0,449.6 424.0,448.9 422.0,448.3 420.0,447.6 418.0,447.0 416.0,446.3 414.0,445.7 412.0,445.0 410.0,444.4 408.0,443.7 406.0,443.0 404.0,442.3 402.0,441.6 400.0,440.9 398.0,440.2 396.0,439.5 394.0,438.8 392.0,438.1 390.0,437.4 388.0,436.7 386.0,436.0 384.0,435.3 382.0,434.6 380.0,433.9 378.0,433.2 376.0,432.5 374.0,431.8 372.0,431.1 370.0,430.4 368.0,429.5 366.0,428.5 364.0,427.5 362.0,426.5 360.0,425.5 358.0,424.6 356.0,423.9 354.0,423.1 352.0,422.3 350.0,421.5 348.0,420.7 346.0,420.0 344.0,419.2 342.0,418.4 340.0,417.6 338.0,416.9 336.0,416.1 334.0,415.3 332.0,414.5 330.0,413.8 328.0,413.0 326.0,412.2 324.0,411.2 322.0,410.3 320.0,409.4 318.0,408.4 316.0,407.5 314.0,406.6 312.0,405.6 310.0,404.7 308.0,403.8 306.0,402.8 304.0,401.9 302.0,401.0 300.0,400.0 298.0,399.1 296.0,397.8 294.0,396.6 292.0,395.3 290.0,394.1 288.0,392.8 286.0,391.6 284.0,390.3 282.0,389.1 280.0,387.8 278.0,386.6 276.0,385.3 274.0,384.1 272.0,382.8 270.0,381.6 268.0,380.3 266.0,379.1 264.0,377.8 262.0,376.6"/></clipPath>
<clipPath id="b3"><polygon points="262.0,376.6 264.0,377.8 266.0,379.1 268.0,380.3 270.0,381.6 272.0,382.8 274.0,384.1 276.0,385.3 278.0,386.6 280.0,387.8 282.0,389.1 284.0,390.3 286.0,391.6 288.0,392.8 290.0,394.1 292.0,395.3 294.0,396.6 296.0,397.8 298.0,399.1 300.0,400.0 302.0,401.0 304.0,401.9 306.0,402.8 308.0,403.8 310.0,404.7 312.0,405.6 314.0,406.6 316.0,407.5 318.0,408.4 320.0,409.4 322.0,410.3 324.0,411.2 326.0,412.2 328.0,413.0 330.0,413.8 332.0,414.5 334.0,415.3 336.0,416.1 338.0,416.9 340.0,417.6 342.0,418.4 344.0,419.2 346.0,420.0 348.0,420.7 350.0,421.5 352.0,422.3 354.0,423.1 356.0,423.9 358.0,424.6 360.0,425.5 362.0,426.5 364.0,427.5 366.0,428.5 368.0,429.5 370.0,430.4 372.0,431.1 374.0,431.8 376.0,432.5 378.0,433.2 380.0,433.9 382.0,434.6 384.0,435.3 386.0,436.0 388.0,436.7 390.0,437.4 392.0,438.1 394.0,438.8 396.0,439.5 398.0,440.2 400.0,440.9 402.0,441.6 404.0,442.3 406.0,443.0 408.0,443.7 410.0,444.4 412.0,445.0 414.0,445.7 416.0,446.3 418.0,447.0 420.0,447.6 422.0,448.3 424.0,448.9 426.0,449.6 428.0,450.2 430.0,450.9 432.0,451.5 434.0,452.2 436.0,452.9 438.0,453.5 440.0,454.2 442.0,454.8 444.0,455.5 446.0,456.1 448.0,456.8 450.0,457.5 452.0,458.1 454.0,458.8 456.0,459.5 458.0,460.2 460.0,460.8 462.0,461.5 464.0,462.2 466.0,462.9 468.0,463.5 470.0,464.2 472.0,464.9 474.0,465.6 476.0,466.4 478.0,467.2 480.0,468.0 482.0,468.8 484.0,469.6 486.0,470.4 488.0,471.2 490.0,472.0 492.0,472.8 494.0,473.6 496.0,474.4 498.0,475.2 500.0,476.0 502.0,476.8 504.0,477.6 506.0,478.4 508.0,479.2 510.0,480.0 512.0,480.7 514.0,481.3 516.0,481.9 518.0,482.5 520.0,483.1 522.0,483.7 524.0,484.3 526.0,484.9 528.0,485.5 530.0,486.1 532.0,486.7 534.0,487.3 536.0,487.9 538.0,488.5 540.0,489.1 542.0,489.7 544.0,490.3 546.0,490.9 548.0,491.5 550.0,492.2 552.0,492.9 554.0,493.6 556.0,494.3 558.0,495.0 560.0,495.7 562.0,496.4 564.0,497.1 566.0,497.8 568.0,498.5 570.0,499.2 572.0,499.9 574.0,500.6 576.0,501.3 578.0,502.0 580.0,502.7 582.0,503.4 584.0,504.1 586.0,504.8 588.0,505.5 590.0,506.3 592.0,507.0 594.0,507.8 596.0,508.5 598.0,509.2 600.0,510.0 602.0,510.7 604.0,511.5 606.0,512.2 608.0,513.0 610.0,513.7 612.0,514.5 614.0,515.2 616.0,516.0 618.0,516.7 620.0,517.4 622.0,518.1 624.0,518.8 626.0,519.5 628.0,520.2 630.0,520.9 632.0,521.6 634.0,522.3 636.0,523.0 638.0,523.7 640.0,524.4 642.0,525.1 644.0,525.8 646.0,526.5 648.0,527.1 650.0,527.4 652.0,527.7 654.0,528.0 656.0,528.3 658.0,528.6 660.0,528.9 662.0,529.2 664.0,529.6 666.0,529.9 668.0,530.2 670.0,530.5 672.0,530.8 674.0,531.1 676.0,531.4 678.0,531.7 680.0,532.0 682.0,532.4 684.0,532.7 686.0,533.0 688.0,533.3 690.0,533.6 692.0,533.9 694.0,534.2 696.0,534.5 698.0,534.9 700.0,535.2 700.0,591.4 698.0,591.0 696.0,590.6 694.0,590.1 692.0,589.7 690.0,589.2 688.0,588.8 686.0,588.3 684.0,587.9 682.0,587.4 680.0,587.0 678.0,586.5 676.0,586.1 674.0,585.6 672.0,585.2 670.0,584.7 668.0,584.3 666.0,583.8 664.0,583.4 662.0,582.9 660.0,582.5 658.0,582.0 656.0,581.6 654.0,581.1 652.0,580.7 650.0,580.2 648.0,579.8 646.0,579.3 644.0,578.9 642.0,578.4 640.0,578.0 638.0,577.5 636.0,577.1 634.0,576.6 632.0,576.2 630.0,575.7 628.0,575.3 626.0,574.8 624.0,574.4 622.0,573.9 620.0,573.5 618.0,573.0 616.0,572.6 614.0,572.1 612.0,571.7 610.0,571.2 608.0,570.8 606.0,570.3 604.0,569.9 602.0,569.4 600.0,569.0 598.0,568.6 596.0,568.2 594.0,567.8 592.0,567.4 590.0,567.0 588.0,566.6 586.0,566.2 584.0,565.8 582.0,565.4 580.0,565.0 578.0,564.6 576.0,564.2 574.0,563.8 572.0,563.4 570.0,563.0 568.0,562.6 566.0,562.2 564.0,561.8 562.0,561.4 560.0,561.0 558.0,560.6 556.0,560.2 554.0,559.8 552.0,559.4 550.0,559.0 548.0,558.5 546.0,558.1 544.0,557.6 542.0,557.2 540.0,556.7 538.0,556.2 536.0,555.8 534.0,555.3 532.0,554.8 530.0,554.4 528.0,553.9 526.0,553.5 524.0,553.0 522.0,552.5 520.0,552.1 518.0,551.6 516.0,551.2 514.0,550.7 512.0,550.2 510.0,549.7 508.0,549.0 506.0,548.3 504.0,547.7 502.0,547.0 500.0,546.4 498.0,545.7 496.0,545.0 494.0,544.4 492.0,543.7 490.0,543.0 488.0,542.4 486.0,541.7 484.0,541.0 482.0,540.4 480.0,539.7 478.0,539.1 476.0,538.4 474.0,537.7 472.0,537.1 470.0,536.5 468.0,535.9 466.0,535.3 464.0,534.7 462.0,534.1 460.0,533.5 458.0,532.8 456.0,532.2 454.0,531.6 452.0,531.0 450.0,530.4 448.0,529.8 446.0,529.2 444.0,528.6 442.0,528.0 440.0,527.4 438.0,526.8 436.0,526.2 434.0,525.6 432.0,525.0 430.0,524.4 428.0,523.8 426.0,523.2 424.0,522.5 422.0,521.9 420.0,521.3 418.0,520.7 416.0,520.1 414.0,519.3 412.0,518.6 410.0,517.8 408.0,517.1 406.0,516.3 404.0,515.5 402.0,514.8 400.0,514.0 398.0,513.3 396.0,512.5 394.0,511.8 392.0,511.0 390.0,510.3 388.0,509.5 386.0,508.8 384.0,508.0 382.0,507.3 380.0,506.5 378.0,505.8 376.0,505.1 374.0,504.4 372.0,503.7 370.0,503.0 368.0,502.3 366.0,501.6 364.0,500.9 362.0,500.2 360.0,499.5 358.0,498.8 356.0,498.1 354.0,497.4 352.0,496.7 350.0,496.0 348.0,495.3 346.0,494.6 344.0,493.9 342.0,493.2 340.0,492.4 338.0,491.5 336.0,490.6 334.0,489.7 332.0,488.8 330.0,487.9 328.0,487.0 326.0,486.1 324.0,485.2 322.0,484.3 320.0,483.4 318.0,482.5 316.0,481.6 314.0,480.7 312.0,479.8 310.0,478.9 308.0,478.0 306.0,477.1 304.0,476.2 302.0,475.3 300.0,474.2 298.0,473.1 296.0,472.0 294.0,471.0 292.0,469.9 290.0,468.8 288.0,467.7 286.0,466.7 284.0,465.6 282.0,464.5 280.0,463.4 278.0,462.4 276.0,461.3 274.0,460.2 272.0,459.1 270.0,458.1 268.0,457.0 266.0,455.9 264.0,454.8 262.0,453.8"/></clipPath>
<clipPath id="b4"><polygon points="262.0,453.8 264.0,454.8 266.0,455.9 268.0,457.0 270.0,458.1 272.0,459.1 274.0,460.2 276.0,461.3 278.0,462.4 280.0,463.4 282.0,464.5 284.0,465.6 286.0,466.7 288.0,467.7 290.0,468.8 292.0,469.9 294.0,471.0 296.0,472.0 298.0,473.1 300.0,474.2 302.0,475.3 304.0,476.2 306.0,477.1 308.0,478.0 310.0,478.9 312.0,479.8 314.0,480.7 316.0,481.6 318.0,482.5 320.0,483.4 322.0,484.3 324.0,485.2 326.0,486.1 328.0,487.0 330.0,487.9 332.0,488.8 334.0,489.7 336.0,490.6 338.0,491.5 340.0,492.4 342.0,493.2 344.0,493.9 346.0,494.6 348.0,495.3 350.0,496.0 352.0,496.7 354.0,497.4 356.0,498.1 358.0,498.8 360.0,499.5 362.0,500.2 364.0,500.9 366.0,501.6 368.0,502.3 370.0,503.0 372.0,503.7 374.0,504.4 376.0,505.1 378.0,505.8 380.0,506.5 382.0,507.3 384.0,508.0 386.0,508.8 388.0,509.5 390.0,510.3 392.0,511.0 394.0,511.8 396.0,512.5 398.0,513.3 400.0,514.0 402.0,514.8 404.0,515.5 406.0,516.3 408.0,517.1 410.0,517.8 412.0,518.6 414.0,519.3 416.0,520.1 418.0,520.7 420.0,521.3 422.0,521.9 424.0,522.5 426.0,523.2 428.0,523.8 430.0,524.4 432.0,525.0 434.0,525.6 436.0,526.2 438.0,526.8 440.0,527.4 442.0,528.0 444.0,528.6 446.0,529.2 448.0,529.8 450.0,530.4 452.0,531.0 454.0,531.6 456.0,532.2 458.0,532.8 460.0,533.5 462.0,534.1 464.0,534.7 466.0,535.3 468.0,535.9 470.0,536.5 472.0,537.1 474.0,537.7 476.0,538.4 478.0,539.1 480.0,539.7 482.0,540.4 484.0,541.0 486.0,541.7 488.0,542.4 490.0,543.0 492.0,543.7 494.0,544.4 496.0,545.0 498.0,545.7 500.0,546.4 502.0,547.0 504.0,547.7 506.0,548.3 508.0,549.0 510.0,549.7 512.0,550.2 514.0,550.7 516.0,551.2 518.0,551.6 520.0,552.1 522.0,552.5 524.0,553.0 526.0,553.5 528.0,553.9 530.0,554.4 532.0,554.8 534.0,555.3 536.0,555.8 538.0,556.2 540.0,556.7 542.0,557.2 544.0,557.6 546.0,558.1 548.0,558.5 550.0,559.0 552.0,559.4 554.0,559.8 556.0,560.2 558.0,560.6 560.0,561.0 562.0,561.4 564.0,561.8 566.0,562.2 568.0,562.6 570.0,563.0 572.0,563.4 574.0,563.8 576.0,564.2 578.0,564.6 580.0,565.0 582.0,565.4 584.0,565.8 586.0,566.2 588.0,566.6 590.0,567.0 592.0,567.4 594.0,567.8 596.0,568.2 598.0,568.6 600.0,569.0 602.0,569.4 604.0,569.9 606.0,570.3 608.0,570.8 610.0,571.2 612.0,571.7 614.0,572.1 616.0,572.6 618.0,573.0 620.0,573.5 622.0,573.9 624.0,574.4 626.0,574.8 628.0,575.3 630.0,575.7 632.0,576.2 634.0,576.6 636.0,577.1 638.0,577.5 640.0,578.0 642.0,578.4 644.0,578.9 646.0,579.3 648.0,579.8 650.0,580.2 652.0,580.7 654.0,581.1 656.0,581.6 658.0,582.0 660.0,582.5 662.0,582.9 664.0,583.4 666.0,583.8 668.0,584.3 670.0,584.7 672.0,585.2 674.0,585.6 676.0,586.1 678.0,586.5 680.0,587.0 682.0,587.4 684.0,587.9 686.0,588.3 688.0,588.8 690.0,589.2 692.0,589.7 694.0,590.1 696.0,590.6 698.0,591.0 700.0,591.4 700.0,695.7 698.0,694.8 696.0,693.9 694.0,693.0 692.0,692.1 690.0,691.2 688.0,690.3 686.0,689.3 684.0,688.4 682.0,687.5 680.0,686.6 678.0,685.7 676.0,684.8 674.0,683.9 672.0,683.0 670.0,682.0 668.0,681.1 666.0,680.2 664.0,679.3 662.0,678.4 660.0,677.5 658.0,676.6 656.0,675.6 654.0,674.7 652.0,673.8 650.0,672.9 648.0,672.0 646.0,671.1 644.0,670.2 642.0,669.3 640.0,668.3 638.0,667.4 636.0,666.5 634.0,665.6 632.0,664.7 630.0,663.8 628.0,662.9 626.0,661.9 624.0,661.0 622.0,660.1 620.0,659.2 618.0,658.3 616.0,657.4 614.0,656.5 612.0,655.6 610.0,654.6 608.0,653.7 606.0,652.8 604.0,651.9 602.0,651.0 600.0,650.1 598.0,649.2 596.0,648.2 594.0,647.3 592.0,646.4 590.0,645.5 588.0,644.6 586.0,643.7 584.0,642.8 582.0,641.9 580.0,640.9 578.0,640.0 576.0,639.1 574.0,638.2 572.0,637.3 570.0,636.4 568.0,635.5 566.0,634.5 564.0,633.6 562.0,632.7 560.0,631.8 558.0,630.9 556.0,630.0 554.0,629.1 552.0,628.2 550.0,627.2 548.0,626.3 546.0,625.4 544.0,624.5 542.0,623.6 540.0,622.7 538.0,621.8 536.0,620.8 534.0,619.9 532.0,619.0 530.0,618.1 528.0,617.2 526.0,616.3 524.0,615.4 522.0,614.6 520.0,613.8 518.0,613.1 516.0,612.3 514.0,611.6 512.0,610.8 510.0,610.1 508.0,609.3 506.0,608.6 504.0,607.8 502.0,607.1 500.0,606.3 498.0,605.6 496.0,604.8 494.0,604.1 492.0,603.3 490.0,602.6 488.0,601.8 486.0,601.1 484.0,600.3 482.0,599.6 480.0,598.8 478.0,598.1 476.0,597.3 474.0,596.5 472.0,595.7 470.0,594.9 468.0,594.1 466.0,593.3 464.0,592.5 462.0,591.7 460.0,590.9 458.0,590.1 456.0,589.4 454.0,588.6 452.0,587.8 450.0,587.0 448.0,586.2 446.0,585.4 444.0,584.6 442.0,583.7 440.0,582.9 438.0,582.1 436.0,581.2 434.0,580.4 432.0,579.5 430.0,578.7 428.0,577.9 426.0,577.0 424.0,576.2 422.0,575.3 420.0,574.5 418.0,573.7 416.0,572.8 414.0,572.0 412.0,571.1 410.0,570.3 408.0,569.3 406.0,568.2 404.0,567.1 402.0,566.1 400.0,565.0 398.0,563.9 396.0,562.8 394.0,561.7 392.0,560.7 390.0,559.6 388.0,558.5 386.0,557.4 384.0,556.4 382.0,555.3 380.0,554.2 378.0,553.2 376.0,552.2 374.0,551.3 372.0,550.4 370.0,549.4 368.0,548.5 366.0,547.6 364.0,546.6 362.0,545.7 360.0,544.8 358.0,543.8 356.0,542.9 354.0,542.0 352.0,541.0 350.0,540.1 348.0,539.3 346.0,538.5 344.0,537.7 342.0,536.9 340.0,536.1 338.0,535.3 336.0,534.5 334.0,533.7 332.0,532.9 330.0,532.1 328.0,531.3 326.0,530.5 324.0,529.7 322.0,528.9 320.0,528.1 318.0,527.3 316.0,526.5 314.0,525.7 312.0,524.9 310.0,524.1 308.0,523.2 306.0,522.4 304.0,521.6 302.0,520.7 300.0,519.9 298.0,519.1 296.0,518.2 294.0,517.4 292.0,516.6 290.0,515.8 288.0,514.9 286.0,514.1 284.0,513.3 282.0,512.4 280.0,511.6 278.0,510.8 276.0,509.9 274.0,509.1 272.0,508.3 270.0,507.5 268.0,506.6 266.0,505.8 264.0,505.0 262.0,504.1"/></clipPath>
<clipPath id="b5"><polygon points="380.0,359.9 382.0,360.4 384.0,360.9 386.0,361.4 388.0,361.9 390.0,362.4 392.0,363.0 394.0,363.5 396.0,364.0 398.0,364.5 400.0,365.0 402.0,365.5 404.0,366.0 406.0,366.5 408.0,367.0 410.0,367.5 412.0,368.0 414.0,368.6 416.0,369.1 418.0,369.6 420.0,370.1 422.0,370.6 424.0,371.1 426.0,371.6 428.0,372.1 430.0,372.6 432.0,373.1 434.0,373.6 436.0,374.2 438.0,374.7 440.0,375.2 442.0,375.7 444.0,376.2 446.0,376.7 448.0,377.2 450.0,377.7 452.0,378.2 454.0,378.7 456.0,379.2 458.0,379.7 460.0,380.3 462.0,380.8 464.0,381.3 466.0,381.8 468.0,382.3 470.0,382.8 472.0,383.3 474.0,383.8 476.0,384.3 478.0,384.8 480.0,385.3 482.0,385.9 484.0,386.4 486.0,386.9 488.0,387.4 490.0,387.9 492.0,388.4 494.0,388.9 496.0,389.4 498.0,389.9 500.0,390.4 502.0,390.9 504.0,391.5 506.0,392.0 508.0,392.5 510.0,393.0 512.0,393.5 514.0,394.0 516.0,394.5 518.0,395.0 520.0,395.5 522.0,396.0 524.0,396.5 526.0,397.1 528.0,397.6 530.0,398.1 532.0,398.6 534.0,399.1 536.0,399.6 538.0,400.1 540.0,400.6 542.0,401.1 544.0,401.6 546.0,402.1 548.0,402.7 550.0,403.2 552.0,403.7 554.0,404.2 556.0,404.7 558.0,405.2 560.0,405.7 562.0,406.2 564.0,406.7 566.0,407.2 568.0,407.7 570.0,408.2 572.0,408.8 574.0,409.3 576.0,409.8 578.0,410.3 580.0,410.8 582.0,411.3 584.0,411.8 586.0,412.3 588.0,412.8 590.0,413.3 592.0,413.8 594.0,414.4 596.0,414.9 598.0,415.4 600.0,415.9 602.0,416.4 604.0,416.9 606.0,417.4 608.0,417.9 610.0,418.4 612.0,418.9 614.0,419.4 616.0,419.9 618.0,420.3 620.0,420.7 622.0,421.1 624.0,421.5 626.0,421.9 628.0,422.3 630.0,422.7 632.0,423.1 634.0,423.6 636.0,424.0 638.0,424.4 640.0,424.8 642.0,425.2 644.0,425.6 646.0,426.0 648.0,426.4 650.0,426.8 652.0,427.4 654.0,428.1 656.0,428.8 658.0,429.5 660.0,430.2 662.0,430.9 664.0,431.6 666.0,432.3 668.0,433.0 670.0,433.7 672.0,434.4 674.0,435.1 676.0,435.9 678.0,436.6 680.0,437.3 682.0,438.0 684.0,438.7 686.0,439.4 688.0,440.1 690.0,440.8 692.0,441.5 694.0,442.2 696.0,442.9 698.0,443.6 700.0,444.3 700.0,535.2 698.0,534.9 696.0,534.5 694.0,534.2 692.0,533.9 690.0,533.6 688.0,533.3 686.0,533.0 684.0,532.7 682.0,532.4 680.0,532.0 678.0,531.7 676.0,531.4 674.0,531.1 672.0,530.8 670.0,530.5 668.0,530.2 666.0,529.9 664.0,529.6 662.0,529.2 660.0,528.9 658.0,528.6 656.0,528.3 654.0,528.0 652.0,527.7 650.0,527.4 648.0,527.1 646.0,526.5 644.0,525.8 642.0,525.1 640.0,524.4 638.0,523.7 636.0,523.0 634.0,522.3 632.0,521.6 630.0,520.9 628.0,520.2 626.0,519.5 624.0,518.8 622.0,518.1 620.0,517.4 618.0,516.7 616.0,516.0 614.0,515.2 612.0,514.5 610.0,513.7 608.0,513.0 606.0,512.2 604.0,511.5 602.0,510.7 600.0,510.0 598.0,509.2 596.0,508.5 594.0,507.8 592.0,507.0 590.0,506.3 588.0,505.5 586.0,504.8 584.0,504.1 582.0,503.4 580.0,502.7 578.0,502.0 576.0,501.3 574.0,500.6 572.0,499.9 570.0,499.2 568.0,498.5 566.0,497.8 564.0,497.1 562.0,496.4 560.0,495.7 558.0,495.0 556.0,494.3 554.0,493.6 552.0,492.9 550.0,492.2 548.0,491.5 546.0,490.9 544.0,490.3 542.0,489.7 540.0,489.1 538.0,488.5 536.0,487.9 534.0,487.3 532.0,486.7 530.0,486.1 528.0,485.5 526.0,484.9 524.0,484.3 522.0,483.7 520.0,483.1 518.0,482.5 516.0,481.9 514.0,481.3 512.0,480.7 510.0,480.0 508.0,479.2 506.0,478.4 504.0,477.6 502.0,476.8 500.0,476.0 498.0,475.2 496.0,474.4 494.0,473.6 492.0,472.8 490.0,472.0 488.0,471.2 486.0,470.4 484.0,469.6 482.0,468.8 480.0,468.0 478.0,467.2 476.0,466.4 474.0,465.6 472.0,464.9 470.0,464.2 468.0,463.5 466.0,462.9 464.0,462.2 462.0,461.5 460.0,460.8 458.0,460.2 456.0,459.5 454.0,458.8 452.0,458.1 450.0,457.5 448.0,456.8 446.0,456.1 444.0,455.5 442.0,454.8 440.0,454.2 438.0,453.5 436.0,452.9 434.0,452.2 432.0,451.5 430.0,450.9 428.0,450.2 426.0,449.6 424.0,448.9 422.0,448.3 420.0,447.6 418.0,447.0 416.0,446.3 414.0,445.7 412.0,445.0 410.0,444.4 408.0,443.7 406.0,443.0 404.0,442.3 402.0,441.6 400.0,440.9 398.0,440.2 396.0,439.5 394.0,438.8 392.0,438.1 390.0,437.4 388.0,436.7 386.0,436.0 384.0,435.3 382.0,434.6 380.0,433.9"/></clipPath>
<clipPath id="b6"><polygon points="380.0,433.9 382.0,434.6 384.0,435.3 386.0,436.0 388.0,436.7 390.0,437.4 392.0,438.1 394.0,438.8 396.0,439.5 398.0,440.2 400.0,440.9 402.0,441.6 404.0,442.3 406.0,443.0 408.0,443.7 410.0,444.4 412.0,445.0 414.0,445.7 416.0,446.3 418.0,447.0 420.0,447.6 422.0,448.3 424.0,448.9 426.0,449.6 428.0,450.2 430.0,450.9 432.0,451.5 434.0,452.2 436.0,452.9 438.0,453.5 440.0,454.2 442.0,454.8 444.0,455.5 446.0,456.1 448.0,456.8 450.0,457.5 452.0,458.1 454.0,458.8 456.0,459.5 458.0,460.2 460.0,460.8 462.0,461.5 464.0,462.2 466.0,462.9 468.0,463.5 470.0,464.2 472.0,464.9 474.0,465.6 476.0,466.4 478.0,467.2 480.0,468.0 482.0,468.8 484.0,469.6 486.0,470.4 488.0,471.2 490.0,472.0 492.0,472.8 494.0,473.6 496.0,474.4 498.0,475.2 500.0,476.0 502.0,476.8 504.0,477.6 506.0,478.4 508.0,479.2 510.0,480.0 512.0,480.7 514.0,481.3 516.0,481.9 518.0,482.5 520.0,483.1 522.0,483.7 524.0,484.3 526.0,484.9 528.0,485.5 530.0,486.1 532.0,486.7 534.0,487.3 536.0,487.9 538.0,488.5 540.0,489.1 542.0,489.7 544.0,490.3 546.0,490.9 548.0,491.5 550.0,492.2 552.0,492.9 554.0,493.6 556.0,494.3 558.0,495.0 560.0,495.7 562.0,496.4 564.0,497.1 566.0,497.8 568.0,498.5 570.0,499.2 572.0,499.9 574.0,500.6 576.0,501.3 578.0,502.0 580.0,502.7 582.0,503.4 584.0,504.1 586.0,504.8 588.0,505.5 590.0,506.3 592.0,507.0 594.0,507.8 596.0,508.5 598.0,509.2 600.0,510.0 602.0,510.7 604.0,511.5 606.0,512.2 608.0,513.0 610.0,513.7 612.0,514.5 614.0,515.2 616.0,516.0 618.0,516.7 620.0,517.4 622.0,518.1 624.0,518.8 626.0,519.5 628.0,520.2 630.0,520.9 632.0,521.6 634.0,522.3 636.0,523.0 638.0,523.7 640.0,524.4 642.0,525.1 644.0,525.8 646.0,526.5 648.0,527.1 650.0,527.4 652.0,527.7 654.0,528.0 656.0,528.3 658.0,528.6 660.0,528.9 662.0,529.2 664.0,529.6 666.0,529.9 668.0,530.2 670.0,530.5 672.0,530.8 674.0,531.1 676.0,531.4 678.0,531.7 680.0,532.0 682.0,532.4 684.0,532.7 686.0,533.0 688.0,533.3 690.0,533.6 692.0,533.9 694.0,534.2 696.0,534.5 698.0,534.9 700.0,535.2 700.0,591.4 698.0,591.0 696.0,590.6 694.0,590.1 692.0,589.7 690.0,589.2 688.0,588.8 686.0,588.3 684.0,587.9 682.0,587.4 680.0,587.0 678.0,586.5 676.0,586.1 674.0,585.6 672.0,585.2 670.0,584.7 668.0,584.3 666.0,583.8 664.0,583.4 662.0,582.9 660.0,582.5 658.0,582.0 656.0,581.6 654.0,581.1 652.0,580.7 650.0,580.2 648.0,579.8 646.0,579.3 644.0,578.9 642.0,578.4 640.0,578.0 638.0,577.5 636.0,577.1 634.0,576.6 632.0,576.2 630.0,575.7 628.0,575.3 626.0,574.8 624.0,574.4 622.0,573.9 620.0,573.5 618.0,573.0 616.0,572.6 614.0,572.1 612.0,571.7 610.0,571.2 608.0,570.8 606.0,570.3 604.0,569.9 602.0,569.4 600.0,569.0 598.0,568.6 596.0,568.2 594.0,567.8 592.0,567.4 590.0,567.0 588.0,566.6 586.0,566.2 584.0,565.8 582.0,565.4 580.0,565.0 578.0,564.6 576.0,564.2 574.0,563.8 572.0,563.4 570.0,563.0 568.0,562.6 566.0,562.2 564.0,561.8 562.0,561.4 560.0,561.0 558.0,560.6 556.0,560.2 554.0,559.8 552.0,559.4 550.0,559.0 548.0,558.5 546.0,558.1 544.0,557.6 542.0,557.2 540.0,556.7 538.0,556.2 536.0,555.8 534.0,555.3 532.0,554.8 530.0,554.4 528.0,553.9 526.0,553.5 524.0,553.0 522.0,552.5 520.0,552.1 518.0,551.6 516.0,551.2 514.0,550.7 512.0,550.2 510.0,549.7 508.0,549.0 506.0,548.3 504.0,547.7 502.0,547.0 500.0,546.4 498.0,545.7 496.0,545.0 494.0,544.4 492.0,543.7 490.0,543.0 488.0,542.4 486.0,541.7 484.0,541.0 482.0,540.4 480.0,539.7 478.0,539.1 476.0,538.4 474.0,537.7 472.0,537.1 470.0,536.5 468.0,535.9 466.0,535.3 464.0,534.7 462.0,534.1 460.0,533.5 458.0,532.8 456.0,532.2 454.0,531.6 452.0,531.0 450.0,530.4 448.0,529.8 446.0,529.2 444.0,528.6 442.0,528.0 440.0,527.4 438.0,526.8 436.0,526.2 434.0,525.6 432.0,525.0 430.0,524.4 428.0,523.8 426.0,523.2 424.0,522.5 422.0,521.9 420.0,521.3 418.0,520.7 416.0,520.1 414.0,519.3 412.0,518.6 410.0,517.8 408.0,517.1 406.0,516.3 404.0,515.5 402.0,514.8 400.0,514.0 398.0,513.3 396.0,512.5 394.0,511.8 392.0,511.0 390.0,510.3 388.0,509.5 386.0,508.8 384.0,508.0 382.0,507.3 380.0,506.5"/></clipPath>
<clipPath id="b7"><polygon points="380.0,506.5 382.0,507.3 384.0,508.0 386.0,508.8 388.0,509.5 390.0,510.3 392.0,511.0 394.0,511.8 396.0,512.5 398.0,513.3 400.0,514.0 402.0,514.8 404.0,515.5 406.0,516.3 408.0,517.1 410.0,517.8 412.0,518.6 414.0,519.3 416.0,520.1 418.0,520.7 420.0,521.3 422.0,521.9 424.0,522.5 426.0,523.2 428.0,523.8 430.0,524.4 432.0,525.0 434.0,525.6 436.0,526.2 438.0,526.8 440.0,527.4 442.0,528.0 444.0,528.6 446.0,529.2 448.0,529.8 450.0,530.4 452.0,531.0 454.0,531.6 456.0,532.2 458.0,532.8 460.0,533.5 462.0,534.1 464.0,534.7 466.0,535.3 468.0,535.9 470.0,536.5 472.0,537.1 474.0,537.7 476.0,538.4 478.0,539.1 480.0,539.7 482.0,540.4 484.0,541.0 486.0,541.7 488.0,542.4 490.0,543.0 492.0,543.7 494.0,544.4 496.0,545.0 498.0,545.7 500.0,546.4 502.0,547.0 504.0,547.7 506.0,548.3 508.0,549.0 510.0,549.7 512.0,550.2 514.0,550.7 516.0,551.2 518.0,551.6 520.0,552.1 522.0,552.5 524.0,553.0 526.0,553.5 528.0,553.9 530.0,554.4 532.0,554.8 534.0,555.3 536.0,555.8 538.0,556.2 540.0,556.7 542.0,557.2 544.0,557.6 546.0,558.1 548.0,558.5 550.0,559.0 552.0,559.4 554.0,559.8 556.0,560.2 558.0,560.6 560.0,561.0 562.0,561.4 564.0,561.8 566.0,562.2 568.0,562.6 570.0,563.0 572.0,563.4 574.0,563.8 576.0,564.2 578.0,564.6 580.0,565.0 582.0,565.4 584.0,565.8 586.0,566.2 588.0,566.6 590.0,567.0 592.0,567.4 594.0,567.8 596.0,568.2 598.0,568.6 600.0,569.0 602.0,569.4 604.0,569.9 606.0,570.3 608.0,570.8 610.0,571.2 612.0,571.7 614.0,572.1 616.0,572.6 618.0,573.0 620.0,573.5 622.0,573.9 624.0,574.4 626.0,574.8 628.0,575.3 630.0,575.7 632.0,576.2 634.0,576.6 636.0,577.1 638.0,577.5 640.0,578.0 642.0,578.4 644.0,578.9 646.0,579.3 648.0,579.8 650.0,580.2 652.0,580.7 654.0,581.1 656.0,581.6 658.0,582.0 660.0,582.5 662.0,582.9 664.0,583.4 666.0,583.8 668.0,584.3 670.0,584.7 672.0,585.2 674.0,585.6 676.0,586.1 678.0,586.5 680.0,587.0 682.0,587.4 684.0,587.9 686.0,588.3 688.0,588.8 690.0,589.2 692.0,589.7 694.0,590.1 696.0,590.6 698.0,591.0 700.0,591.4 700.0,660.0 698.0,660.0 696.0,660.0 694.0,660.0 692.0,660.0 690.0,660.0 688.0,660.0 686.0,660.0 684.0,660.0 682.0,660.0 680.0,660.0 678.0,660.0 676.0,660.0 674.0,660.0 672.0,660.0 670.0,660.0 668.0,660.0 666.0,660.0 664.0,660.0 662.0,660.0 660.0,660.0 658.0,660.0 656.0,660.0 654.0,660.0 652.0,660.0 650.0,660.0 648.0,660.0 646.0,660.0 644.0,660.0 642.0,660.0 640.0,660.0 638.0,660.0 636.0,660.0 634.0,660.0 632.0,660.0 630.0,660.0 628.0,660.0 626.0,660.0 624.0,660.0 622.0,660.0 620.0,660.0 618.0,660.0 616.0,660.0 614.0,660.0 612.0,660.0 610.0,660.0 608.0,660.0 606.0,660.0 604.0,660.0 602.0,660.0 600.0,660.0 598.0,660.0 596.0,660.0 594.0,660.0 592.0,660.0 590.0,660.0 588.0,660.0 586.0,660.0 584.0,660.0 582.0,660.0 580.0,660.0 578.0,660.0 576.0,660.0 574.0,660.0 572.0,660.0 570.0,660.0 568.0,660.0 566.0,660.0 564.0,660.0 562.0,660.0 560.0,660.0 558.0,660.0 556.0,660.0 554.0,660.0 552.0,660.0 550.0,660.0 548.0,660.0 546.0,660.0 544.0,660.0 542.0,660.0 540.0,660.0 538.0,660.0 536.0,660.0 534.0,660.0 532.0,660.0 530.0,660.0 528.0,660.0 526.0,660.0 524.0,660.0 522.0,660.0 520.0,660.0 518.0,660.0 516.0,660.0 514.0,660.0 512.0,660.0 510.0,660.0 508.0,660.0 506.0,660.0 504.0,660.0 502.0,660.0 500.0,660.0 498.0,660.0 496.0,660.0 494.0,660.0 492.0,660.0 490.0,660.0 488.0,660.0 486.0,660.0 484.0,660.0 482.0,660.0 480.0,660.0 478.0,660.0 476.0,660.0 474.0,660.0 472.0,660.0 470.0,660.0 468.0,660.0 466.0,660.0 464.0,660.0 462.0,660.0 460.0,660.0 458.0,660.0 456.0,660.0 454.0,660.0 452.0,660.0 450.0,660.0 448.0,660.0 446.0,660.0 444.0,660.0 442.0,660.0 440.0,660.0 438.0,660.0 436.0,660.0 434.0,660.0 432.0,660.0 430.0,660.0 428.0,660.0 426.0,660.0 424.0,660.0 422.0,660.0 420.0,660.0 418.0,660.0 416.0,660.0 414.0,660.0 412.0,660.0 410.0,660.0 408.0,660.0 406.0,660.0 404.0,660.0 402.0,660.0 400.0,660.0 398.0,660.0 396.0,660.0 394.0,660.0 392.0,660.0 390.0,660.0 388.0,660.0 386.0,660.0 384.0,660.0 382.0,660.0 380.0,660.0"/></clipPath>
</defs>
<g clip-path="url(#vl)"><g clip-path="url(#b8)"><polygon points="547.4,404.7 554.5,404.5 554.6,411.5 547.6,411.7" fill="#38ff00"/><polygon points="554.5,404.5 561.5,404.3 561.7,411.3 554.6,411.5" fill="#38ff00"/><polygon points="561.5,404.3 568.5,404.1 568.7,411.1 561.7,411.3" fill="#78ff00"/><polygon points="561.7,411.3 568.7,411.1 568.9,418.1 561.9,418.3" fill="#78ff00"/><polygon points="568.5,404.1 575.5,403.9 575.7,410.9 568.7,411.1" fill="#78ff00"/><polygon points="568.7,411.1 575.7,410.9 575.9,417.9 568.9,418.1" fill="#fff500"/><polygon points="575.5,403.9 582.5,403.7 582.7,410.7 575.7,410.9" fill="#beff00"/><polygon points="575.7,410.9 582.7,410.7 582.9,417.7 575.9,417.9" fill="#ffd200"/><polygon points="575.9,417.9 582.9,417.7 583.1,424.8 576.1,425.0" fill="#ffd200"/><polygon points="582.5,403.7 589.6,403.5 589.8,410.5 582.7,410.7" fill="#38ff00"/><polygon points="582.7,410.7 589.8,410.5 589.9,417.6 582.9,417.7" fill="#fff500"/><polygon points="582.9,417.7 589.9,417.6 590.1,424.6 583.1,424.8" fill="#fff500"/><polygon points="589.6,403.5 596.6,403.3 596.8,410.3 589.8,410.5" fill="#38ff00"/><polygon points="589.8,410.5 596.8,410.3 597.0,417.4 589.9,417.6" fill="#fff500"/><polygon points="589.9,417.6 597.0,417.4 597.2,424.4 590.1,424.6" fill="#fff500"/></g></g>
<g clip-path="url(#vl)"><g clip-path="url(#b2)"><polygon points="520.9,461.6 527.9,461.4 528.1,468.4 521.1,468.6" fill="#78ff00"/><polygon points="527.9,461.4 534.9,461.2 535.1,468.2 528.1,468.4" fill="#78ff00"/><polygon points="534.7,454.2 541.8,454.0 542.0,461.0 534.9,461.2" fill="#0050ff"/><polygon points="534.9,461.2 542.0,461.0 542.2,468.0 535.1,468.2" fill="#00ff8c"/><polygon points="535.1,468.2 542.2,468.0 542.3,475.0 535.3,475.2" fill="#00ff8c"/><polygon points="541.8,454.0 548.8,453.8 549.0,460.8 542.0,461.0" fill="#38ff00"/><polygon points="542.0,461.0 549.0,460.8 549.2,467.8 542.2,468.0" fill="#78ff00"/><polygon points="542.2,468.0 549.2,467.8 549.4,474.8 542.3,475.0" fill="#78ff00"/><polygon points="548.6,446.8 555.6,446.6 555.8,453.6 548.8,453.8" fill="#0096ff"/><polygon points="548.8,453.8 555.8,453.6 556.0,460.6 549.0,460.8" fill="#ffd200"/><polygon points="549.0,460.8 556.0,460.6 556.2,467.6 549.2,467.8" fill="#78ff00"/><polygon points="549.2,467.8 556.2,467.6 556.4,474.6 549.4,474.8" fill="#78ff00"/><polygon points="549.4,474.8 556.4,474.6 556.6,481.6 549.6,481.8" fill="#78ff00"/><polygon points="555.6,446.6 562.6,446.4 562.8,453.4 555.8,453.6" fill="#00ff8c"/><polygon points="555.8,453.6 562.8,453.4 563.0,460.4 556.0,460.6" fill="#ffd200"/><polygon points="556.0,460.6 563.0,460.4 563.2,467.4 556.2,467.6" fill="#78ff00"/><polygon points="556.2,467.6 563.2,467.4 563.4,474.4 556.4,474.6" fill="#78ff00"/><polygon points="556.4,474.6 563.4,474.4 563.6,481.4 556.6,481.6" fill="#78ff00"/><polygon points="556.6,481.6 563.6,481.4 563.8,488.4 556.8,488.6" fill="#78ff00"/><polygon points="562.6,446.4 569.7,446.2 569.8,453.2 562.8,453.4" fill="#beff00"/><polygon points="562.8,453.4 569.8,453.2 570.0,460.2 563.0,460.4" fill="#78ff00"/><polygon points="563.0,460.4 570.0,460.2 570.2,467.2 563.2,467.4" fill="#78ff00"/><polygon points="563.2,467.4 570.2,467.2 570.4,474.2 563.4,474.4" fill="#38ff00"/><polygon points="563.4,474.4 570.4,474.2 570.6,481.2 563.6,481.4" fill="#78ff00"/><polygon points="563.6,481.4 570.6,481.2 570.8,488.2 563.8,488.4" fill="#78ff00"/><polygon points="569.5,439.2 576.5,439.0 576.7,446.0 569.7,446.2" fill="#0096ff"/><polygon points="569.7,446.2 576.7,446.0 576.9,453.0 569.8,453.2" fill="#78ff00"/><polygon points="569.8,453.2 576.9,453.0 577.1,460.0 570.0,460.2" fill="#78ff00"/><polygon points="570.0,460.2 577.1,460.0 577.3,467.0 570.2,467.2" fill="#78ff00"/><polygon points="570.2,467.2 577.3,467.0 577.4,474.0 570.4,474.2" fill="#78ff00"/><polygon points="570.4,474.2 577.4,474.0 577.6,481.0 570.6,481.2" fill="#78ff00"/><polygon points="570.6,481.2 577.6,481.0 577.8,488.0 570.8,488.2" fill="#78ff00"/><polygon points="570.8,488.2 577.8,488.0 578.0,495.0 571.0,495.2" fill="#78ff00"/><polygon points="576.5,439.0 583.5,438.8 583.7,445.8 576.7,446.0" fill="#38ff00"/><polygon points="576.7,446.0 583.7,445.8 583.9,452.8 576.9,453.0" fill="#fff500"/><polygon points="576.9,453.0 583.9,452.8 584.1,459.8 577.1,460.0" fill="#fff500"/><polygon points="577.1,460.0 584.1,459.8 584.3,466.8 577.3,467.0" fill="#fff500"/><polygon points="577.3,467.0 584.3,466.8 584.5,473.8 577.4,474.0" fill="#beff00"/><polygon points="577.4,474.0 584.5,473.8 584.7,480.8 577.6,481.0" fill="#78ff00"/><polygon points="577.6,481.0 584.7,480.8 584.9,487.8 577.8,488.0" fill="#78ff00"/><polygon points="577.8,488.0 584.9,487.8 585.0,494.8 578.0,495.0" fill="#78ff00"/><polygon points="583.5,438.8 590.5,438.6 590.7,445.6 583.7,445.8" fill="#beff00"/><polygon points="583.7,445.8 590.7,445.6 590.9,452.6 583.9,452.8" fill="#fff500"/><polygon points="583.9,452.8 590.9,452.6 591.1,459.6 584.1,459.8" fill="#fff500"/><polygon points="584.1,459.8 591.1,459.6 591.3,466.6 584.3,466.8" fill="#fff500"/><polygon points="584.3,466.8 591.3,466.6 591.5,473.6 584.5,473.8" fill="#fff500"/><polygon points="584.5,473.8 591.5,473.6 591.7,480.6 584.7,480.8" fill="#78ff00"/><polygon points="584.7,480.8 591.7,480.6 591.9,487.6 584.9,487.8" fill="#78ff00"/><polygon points="584.9,487.8 591.9,487.6 592.1,494.6 585.0,494.8" fill="#78ff00"/></g></g>
<g clip-path="url(#vl)"><g clip-path="url(#b1)"><polygon points="450.5,456.6 457.5,456.4 457.7,463.4 450.7,463.6" fill="#0050ff"/><polygon points="456.9,435.3 464.0,435.1 464.2,442.1 457.1,442.3" fill="#0050ff"/><polygon points="457.1,442.3 464.2,442.1 464.3,449.1 457.3,449.3" fill="#0050ff"/><polygon points="457.3,449.3 464.3,449.1 464.5,456.2 457.5,456.4" fill="#0050ff"/><polygon points="457.5,456.4 464.5,456.2 464.7,463.2 457.7,463.4" fill="#0050ff"/><polygon points="463.6,421.1 470.6,420.9 470.8,427.9 463.8,428.1" fill="#00e6ff"/><polygon points="463.8,428.1 470.8,427.9 471.0,434.9 464.0,435.1" fill="#00e6ff"/><polygon points="464.0,435.1 471.0,434.9 471.2,441.9 464.2,442.1" fill="#38ff00"/><polygon points="464.2,442.1 471.2,441.9 471.4,448.9 464.3,449.1" fill="#fff500"/><polygon points="464.3,449.1 471.4,448.9 471.6,456.0 464.5,456.2" fill="#ffd200"/><polygon points="464.5,456.2 471.6,456.0 471.8,463.0 464.7,463.2" fill="#beff00"/><polygon points="464.7,463.2 471.8,463.0 472.0,470.0 464.9,470.2" fill="#beff00"/><polygon points="470.8,427.9 477.8,427.7 478.0,434.7 471.0,434.9" fill="#beff00"/><polygon points="471.0,434.9 478.0,434.7 478.2,441.7 471.2,441.9" fill="#beff00"/><polygon points="471.2,441.9 478.2,441.7 478.4,448.8 471.4,448.9" fill="#ffd200"/><polygon points="471.4,448.9 478.4,448.8 478.6,455.8 471.6,456.0" fill="#fff500"/><polygon points="471.6,456.0 478.6,455.8 478.8,462.8 471.8,463.0" fill="#fff500"/><polygon points="471.8,463.0 478.8,462.8 479.0,469.8 472.0,470.0" fill="#fff500"/><polygon points="478.0,434.7 485.0,434.5 485.2,441.5 478.2,441.7" fill="#fff500"/><polygon points="478.2,441.7 485.2,441.5 485.4,448.6 478.4,448.8" fill="#fff500"/><polygon points="478.4,448.8 485.4,448.6 485.6,455.6 478.6,455.8" fill="#78ff00"/><polygon points="478.6,455.8 485.6,455.6 485.8,462.6 478.8,462.8" fill="#78ff00"/><polygon points="478.8,462.8 485.8,462.6 486.0,469.6 479.0,469.8" fill="#78ff00"/><polygon points="479.0,469.8 486.0,469.6 486.2,476.6 479.2,476.8" fill="#78ff00"/><polygon points="485.0,434.5 492.0,434.3 492.2,441.3 485.2,441.5" fill="#78ff00"/><polygon points="485.2,441.5 492.2,441.3 492.4,448.4 485.4,448.6" fill="#78ff00"/><polygon points="485.4,448.6 492.4,448.4 492.6,455.4 485.6,455.6" fill="#78ff00"/><polygon points="485.6,455.6 492.6,455.4 492.8,462.4 485.8,462.6" fill="#78ff00"/><polygon points="485.8,462.6 492.8,462.4 493.0,469.4 486.0,469.6" fill="#fff500"/><polygon points="486.0,469.6 493.0,469.4 493.2,476.4 486.2,476.6" fill="#fff500"/><polygon points="492.2,441.3 499.3,441.1 499.4,448.2 492.4,448.4" fill="#78ff00"/><polygon points="492.4,448.4 499.4,448.2 499.6,455.2 492.6,455.4" fill="#78ff00"/><polygon points="492.6,455.4 499.6,455.2 499.8,462.2 492.8,462.4" fill="#78ff00"/><polygon points="492.8,462.4 499.8,462.2 500.0,469.2 493.0,469.4" fill="#78ff00"/><polygon points="493.0,469.4 500.0,469.2 500.2,476.2 493.2,476.4" fill="#78ff00"/><polygon points="499.3,441.1 506.3,440.9 506.5,448.0 499.4,448.2" fill="#78ff00"/><polygon points="499.4,448.2 506.5,448.0 506.7,455.0 499.6,455.2" fill="#78ff00"/><polygon points="499.6,455.2 506.7,455.0 506.9,462.0 499.8,462.2" fill="#78ff00"/><polygon points="499.8,462.2 506.9,462.0 507.1,469.0 500.0,469.2" fill="#78ff00"/><polygon points="500.0,469.2 507.1,469.0 507.2,476.0 500.2,476.2" fill="#78ff00"/><polygon points="500.2,476.2 507.2,476.0 507.4,483.0 500.4,483.2" fill="#78ff00"/><polygon points="506.5,448.0 513.5,447.8 513.7,454.8 506.7,455.0" fill="#fff500"/><polygon points="506.7,455.0 513.7,454.8 513.9,461.8 506.9,462.0" fill="#fff500"/><polygon points="506.9,462.0 513.9,461.8 514.1,468.8 507.1,469.0" fill="#78ff00"/><polygon points="507.1,469.0 514.1,468.8 514.3,475.8 507.2,476.0" fill="#78ff00"/><polygon points="507.2,476.0 514.3,475.8 514.5,482.8 507.4,483.0" fill="#fff500"/><polygon points="513.7,454.8 520.7,454.6 520.9,461.6 513.9,461.8" fill="#78ff00"/><polygon points="513.9,461.8 520.9,461.6 521.1,468.6 514.1,468.8" fill="#78ff00"/><polygon points="514.1,468.8 521.1,468.6 521.3,475.6 514.3,475.8" fill="#78ff00"/><polygon points="514.3,475.8 521.3,475.6 521.5,482.6 514.5,482.8" fill="#78ff00"/><polygon points="514.5,482.8 521.5,482.6 521.7,489.6 514.7,489.8" fill="#78ff00"/><polygon points="520.7,454.6 527.7,454.4 527.9,461.4 520.9,461.6" fill="#78ff00"/><polygon points="520.9,461.6 527.9,461.4 528.1,468.4 521.1,468.6" fill="#78ff00"/><polygon points="521.1,468.6 528.1,468.4 528.3,475.4 521.3,475.6" fill="#78ff00"/><polygon points="521.3,475.6 528.3,475.4 528.5,482.4 521.5,482.6" fill="#fff500"/><polygon points="521.5,482.6 528.5,482.4 528.7,489.4 521.7,489.6" fill="#fff500"/><polygon points="527.9,461.4 534.9,461.2 535.1,468.2 528.1,468.4" fill="#78ff00"/><polygon points="528.1,468.4 535.1,468.2 535.3,475.2 528.3,475.4" fill="#78ff00"/><polygon points="528.3,475.4 535.3,475.2 535.5,482.2 528.5,482.4" fill="#78ff00"/><polygon points="528.5,482.4 535.5,482.2 535.7,489.2 528.7,489.4" fill="#78ff00"/><polygon points="534.9,461.2 542.0,461.0 542.2,468.0 535.1,468.2" fill="#78ff00"/><polygon points="535.1,468.2 542.2,468.0 542.3,475.0 535.3,475.2" fill="#78ff00"/><polygon points="535.3,475.2 542.3,475.0 542.5,482.0 535.5,482.2" fill="#78ff00"/><polygon points="535.5,482.2 542.5,482.0 542.7,489.0 535.7,489.2" fill="#78ff00"/><polygon points="535.7,489.2 542.7,489.0 542.9,496.0 535.9,496.2" fill="#78ff00"/><polygon points="542.2,468.0 549.2,467.8 549.4,474.8 542.3,475.0" fill="#38ff00"/><polygon points="542.3,475.0 549.4,474.8 549.6,481.8 542.5,482.0" fill="#38ff00"/><polygon points="542.5,482.0 549.6,481.8 549.8,488.8 542.7,489.0" fill="#78ff00"/><polygon points="542.7,489.0 549.8,488.8 549.9,495.8 542.9,496.0" fill="#78ff00"/><polygon points="549.4,474.8 556.4,474.6 556.6,481.6 549.6,481.8" fill="#78ff00"/><polygon points="549.6,481.8 556.6,481.6 556.8,488.6 549.8,488.8" fill="#38ff00"/><polygon points="549.8,488.8 556.8,488.6 557.0,495.6 549.9,495.8" fill="#78ff00"/><polygon points="556.4,474.6 563.4,474.4 563.6,481.4 556.6,481.6" fill="#78ff00"/><polygon points="556.6,481.6 563.6,481.4 563.8,488.4 556.8,488.6" fill="#78ff00"/><polygon points="556.8,488.6 563.8,488.4 564.0,495.4 557.0,495.6" fill="#38ff00"/><polygon points="557.0,495.6 564.0,495.4 564.2,502.4 557.2,502.6" fill="#38ff00"/><polygon points="563.6,481.4 570.6,481.2 570.8,488.2 563.8,488.4" fill="#78ff00"/><polygon points="563.8,488.4 570.8,488.2 571.0,495.2 564.0,495.4" fill="#78ff00"/><polygon points="564.0,495.4 571.0,495.2 571.2,502.2 564.2,502.4" fill="#78ff00"/><polygon points="570.6,481.2 577.6,481.0 577.8,488.0 570.8,488.2" fill="#78ff00"/><polygon points="570.8,488.2 577.8,488.0 578.0,495.0 571.0,495.2" fill="#78ff00"/><polygon points="571.0,495.2 578.0,495.0 578.2,502.0 571.2,502.2" fill="#78ff00"/><polygon points="577.8,488.0 584.9,487.8 585.0,494.8 578.0,495.0" fill="#78ff00"/><polygon points="578.0,495.0 585.0,494.8 585.2,501.8 578.2,502.0" fill="#78ff00"/><polygon points="578.2,502.0 585.2,501.8 585.4,508.8 578.4,509.0" fill="#78ff00"/><polygon points="585.0,494.8 592.1,494.6 592.3,501.6 585.2,501.8" fill="#78ff00"/><polygon points="585.2,501.8 592.3,501.6 592.4,508.6 585.4,508.8" fill="#78ff00"/></g></g>
<g clip-path="url(#vl)"><g clip-path="url(#b3)"><polygon points="457.5,456.4 464.5,456.2 464.7,463.2 457.7,463.4" fill="#fff500"/><polygon points="464.5,456.2 471.6,456.0 471.8,463.0 464.7,463.2" fill="#fff500"/><polygon points="464.7,463.2 471.8,463.0 472.0,470.0 464.9,470.2" fill="#fff500"/><polygon points="471.8,463.0 478.8,462.8 479.0,469.8 472.0,470.0" fill="#fff500"/><polygon points="478.8,462.8 485.8,462.6 486.0,469.6 479.0,469.8" fill="#fff500"/><polygon points="486.0,469.6 493.0,469.4 493.2,476.4 486.2,476.6" fill="#00ff8c"/><polygon points="486.2,476.6 493.2,476.4 493.4,483.4 486.4,483.6" fill="#00ff8c"/><polygon points="486.4,483.6 493.4,483.4 493.6,490.4 486.6,490.6" fill="#00ff8c"/><polygon points="486.6,490.6 493.6,490.4 493.8,497.4 486.8,497.6" fill="#0050ff"/><polygon points="493.0,469.4 500.0,469.2 500.2,476.2 493.2,476.4" fill="#78ff00"/><polygon points="493.2,476.4 500.2,476.2 500.4,483.2 493.4,483.4" fill="#78ff00"/><polygon points="493.4,483.4 500.4,483.2 500.6,490.2 493.6,490.4" fill="#78ff00"/><polygon points="493.6,490.4 500.6,490.2 500.8,497.2 493.8,497.4" fill="#38ff00"/><polygon points="493.8,497.4 500.8,497.2 501.0,504.2 494.0,504.4" fill="#38ff00"/><polygon points="494.0,504.4 501.0,504.2 501.2,511.2 494.2,511.4" fill="#38ff00"/><polygon points="494.2,511.4 501.2,511.2 501.4,518.2 494.4,518.4" fill="#00ff8c"/><polygon points="494.4,518.4 501.4,518.2 501.6,525.2 494.6,525.4" fill="#0050ff"/><polygon points="495.2,546.4 502.2,546.2 502.4,553.3 495.4,553.5" fill="#0050ff"/><polygon points="500.2,476.2 507.2,476.0 507.4,483.0 500.4,483.2" fill="#78ff00"/><polygon points="500.4,483.2 507.4,483.0 507.6,490.0 500.6,490.2" fill="#78ff00"/><polygon points="500.6,490.2 507.6,490.0 507.8,497.0 500.8,497.2" fill="#78ff00"/><polygon points="500.8,497.2 507.8,497.0 508.0,504.0 501.0,504.2" fill="#78ff00"/><polygon points="501.0,504.2 508.0,504.0 508.2,511.0 501.2,511.2" fill="#fff500"/><polygon points="501.2,511.2 508.2,511.0 508.4,518.0 501.4,518.2" fill="#fff500"/><polygon points="501.4,518.2 508.4,518.0 508.6,525.0 501.6,525.2" fill="#78ff00"/><polygon points="501.6,525.2 508.6,525.0 508.8,532.0 501.8,532.2" fill="#38ff00"/><polygon points="501.8,532.2 508.8,532.0 509.0,539.0 502.0,539.2" fill="#00e6ff"/><polygon points="502.0,539.2 509.0,539.0 509.2,546.0 502.2,546.2" fill="#0050ff"/><polygon points="502.2,546.2 509.2,546.0 509.4,553.1 502.4,553.3" fill="#0050ff"/><polygon points="507.2,476.0 514.3,475.8 514.5,482.8 507.4,483.0" fill="#78ff00"/><polygon points="507.4,483.0 514.5,482.8 514.7,489.8 507.6,490.0" fill="#78ff00"/><polygon points="507.6,490.0 514.7,489.8 514.9,496.8 507.8,497.0" fill="#78ff00"/><polygon points="507.8,497.0 514.9,496.8 515.0,503.8 508.0,504.0" fill="#fff500"/><polygon points="508.0,504.0 515.0,503.8 515.2,510.8 508.2,511.0" fill="#78ff00"/><polygon points="508.2,511.0 515.2,510.8 515.4,517.8 508.4,518.0" fill="#78ff00"/><polygon points="508.4,518.0 515.4,517.8 515.6,524.8 508.6,525.0" fill="#fff500"/><polygon points="508.6,525.0 515.6,524.8 515.8,531.8 508.8,532.0" fill="#fff500"/><polygon points="508.8,532.0 515.8,531.8 516.0,538.8 509.0,539.0" fill="#fff500"/><polygon points="509.0,539.0 516.0,538.8 516.2,545.8 509.2,546.0" fill="#38ff00"/><polygon points="509.2,546.0 516.2,545.8 516.4,552.9 509.4,553.1" fill="#00ff8c"/><polygon points="514.3,475.8 521.3,475.6 521.5,482.6 514.5,482.8" fill="#78ff00"/><polygon points="514.5,482.8 521.5,482.6 521.7,489.6 514.7,489.8" fill="#78ff00"/><polygon points="514.7,489.8 521.7,489.6 521.9,496.6 514.9,496.8" fill="#78ff00"/><polygon points="514.9,496.8 521.9,496.6 522.1,503.6 515.0,503.8" fill="#78ff00"/><polygon points="515.0,503.8 522.1,503.6 522.3,510.6 515.2,510.8" fill="#78ff00"/><polygon points="515.2,510.8 522.3,510.6 522.5,517.6 515.4,517.8" fill="#78ff00"/><polygon points="515.4,517.8 522.5,517.6 522.6,524.6 515.6,524.8" fill="#78ff00"/><polygon points="515.6,524.8 522.6,524.6 522.8,531.6 515.8,531.8" fill="#78ff00"/><polygon points="515.8,531.8 522.8,531.6 523.0,538.6 516.0,538.8" fill="#beff00"/><polygon points="516.0,538.8 523.0,538.6 523.2,545.6 516.2,545.8" fill="#78ff00"/><polygon points="516.2,545.8 523.2,545.6 523.4,552.6 516.4,552.9" fill="#78ff00"/><polygon points="521.5,482.6 528.5,482.4 528.7,489.4 521.7,489.6" fill="#78ff00"/><polygon points="521.7,489.6 528.7,489.4 528.9,496.4 521.9,496.6" fill="#78ff00"/><polygon points="521.9,496.6 528.9,496.4 529.1,503.4 522.1,503.6" fill="#78ff00"/><polygon points="522.1,503.6 529.1,503.4 529.3,510.4 522.3,510.6" fill="#78ff00"/><polygon points="522.3,510.6 529.3,510.4 529.5,517.4 522.5,517.6" fill="#78ff00"/><polygon points="522.5,517.6 529.5,517.4 529.7,524.4 522.6,524.6" fill="#78ff00"/><polygon points="522.6,524.6 529.7,524.4 529.9,531.4 522.8,531.6" fill="#78ff00"/><polygon points="522.8,531.6 529.9,531.4 530.1,538.4 523.0,538.6" fill="#78ff00"/><polygon points="523.0,538.6 530.1,538.4 530.2,545.4 523.2,545.6" fill="#78ff00"/><polygon points="523.2,545.6 530.2,545.4 530.4,552.4 523.4,552.6" fill="#78ff00"/><polygon points="523.4,552.6 530.4,552.4 530.6,559.5 523.6,559.7" fill="#78ff00"/><polygon points="528.5,482.4 535.5,482.2 535.7,489.2 528.7,489.4" fill="#78ff00"/><polygon points="528.7,489.4 535.7,489.2 535.9,496.2 528.9,496.4" fill="#78ff00"/><polygon points="528.9,496.4 535.9,496.2 536.1,503.2 529.1,503.4" fill="#78ff00"/><polygon points="529.1,503.4 536.1,503.2 536.3,510.2 529.3,510.4" fill="#78ff00"/><polygon points="529.3,510.4 536.3,510.2 536.5,517.2 529.5,517.4" fill="#78ff00"/><polygon points="529.5,517.4 536.5,517.2 536.7,524.2 529.7,524.4" fill="#78ff00"/><polygon points="529.7,524.4 536.7,524.2 536.9,531.2 529.9,531.4" fill="#78ff00"/><polygon points="529.9,531.4 536.9,531.2 537.1,538.2 530.1,538.4" fill="#78ff00"/><polygon points="530.1,538.4 537.1,538.2 537.3,545.2 530.2,545.4" fill="#78ff00"/><polygon points="530.2,545.4 537.3,545.2 537.5,552.2 530.4,552.4" fill="#78ff00"/><polygon points="530.4,552.4 537.5,552.2 537.7,559.3 530.6,559.5" fill="#78ff00"/><polygon points="535.5,482.2 542.5,482.0 542.7,489.0 535.7,489.2" fill="#78ff00"/><polygon points="535.7,489.2 542.7,489.0 542.9,496.0 535.9,496.2" fill="#78ff00"/><polygon points="535.9,496.2 542.9,496.0 543.1,503.0 536.1,503.2" fill="#78ff00"/><polygon points="536.1,503.2 543.1,503.0 543.3,510.0 536.3,510.2" fill="#78ff00"/><polygon points="536.3,510.2 543.3,510.0 543.5,517.0 536.5,517.2" fill="#38ff00"/><polygon points="536.5,517.2 543.5,517.0 543.7,524.0 536.7,524.2" fill="#78ff00"/><polygon points="536.7,524.2 543.7,524.0 543.9,531.0 536.9,531.2" fill="#78ff00"/><polygon points="536.9,531.2 543.9,531.0 544.1,538.0 537.1,538.2" fill="#78ff00"/><polygon points="537.1,538.2 544.1,538.0 544.3,545.0 537.3,545.2" fill="#78ff00"/><polygon points="537.3,545.2 544.3,545.0 544.5,552.0 537.5,552.2" fill="#78ff00"/><polygon points="542.7,489.0 549.8,488.8 549.9,495.8 542.9,496.0" fill="#78ff00"/><polygon points="542.9,496.0 549.9,495.8 550.1,502.8 543.1,503.0" fill="#78ff00"/><polygon points="543.1,503.0 550.1,502.8 550.3,509.8 543.3,510.0" fill="#78ff00"/><polygon points="543.3,510.0 550.3,509.8 550.5,516.8 543.5,517.0" fill="#38ff00"/><polygon points="543.5,517.0 550.5,516.8 550.7,523.8 543.7,524.0" fill="#38ff00"/><polygon points="543.7,524.0 550.7,523.8 550.9,530.8 543.9,531.0" fill="#38ff00"/><polygon points="543.9,531.0 550.9,530.8 551.1,537.8 544.1,538.0" fill="#38ff00"/><polygon points="544.1,538.0 551.1,537.8 551.3,544.8 544.3,545.0" fill="#38ff00"/><polygon points="544.3,545.0 551.3,544.8 551.5,551.8 544.5,552.0" fill="#78ff00"/><polygon points="544.5,552.0 551.5,551.8 551.7,558.8 544.7,559.1" fill="#78ff00"/><polygon points="549.8,488.8 556.8,488.6 557.0,495.6 549.9,495.8" fill="#38ff00"/><polygon points="549.9,495.8 557.0,495.6 557.2,502.6 550.1,502.8" fill="#38ff00"/><polygon points="550.1,502.8 557.2,502.6 557.4,509.6 550.3,509.8" fill="#38ff00"/><polygon points="550.3,509.8 557.4,509.6 557.5,516.6 550.5,516.8" fill="#38ff00"/><polygon points="550.5,516.8 557.5,516.6 557.7,523.6 550.7,523.8" fill="#38ff00"/><polygon points="550.7,523.8 557.7,523.6 557.9,530.6 550.9,530.8" fill="#38ff00"/><polygon points="550.9,530.8 557.9,530.6 558.1,537.6 551.1,537.8" fill="#38ff00"/><polygon points="551.1,537.8 558.1,537.6 558.3,544.6 551.3,544.8" fill="#38ff00"/><polygon points="551.3,544.8 558.3,544.6 558.5,551.6 551.5,551.8" fill="#38ff00"/><polygon points="551.5,551.8 558.5,551.6 558.7,558.6 551.7,558.8" fill="#38ff00"/><polygon points="551.7,558.8 558.7,558.6 558.9,565.7 551.9,565.9" fill="#38ff00"/><polygon points="556.8,488.6 563.8,488.4 564.0,495.4 557.0,495.6" fill="#38ff00"/><polygon points="557.0,495.6 564.0,495.4 564.2,502.4 557.2,502.6" fill="#38ff00"/><polygon points="557.2,502.6 564.2,502.4 564.4,509.4 557.4,509.6" fill="#38ff00"/><polygon points="557.4,509.6 564.4,509.4 564.6,516.4 557.5,516.6" fill="#38ff00"/><polygon points="557.5,516.6 564.6,516.4 564.8,523.4 557.7,523.6" fill="#38ff00"/><polygon points="557.7,523.6 564.8,523.4 565.0,530.4 557.9,530.6" fill="#38ff00"/><polygon points="557.9,530.6 565.0,530.4 565.1,537.4 558.1,537.6" fill="#38ff00"/><polygon points="558.1,537.6 565.1,537.4 565.3,544.4 558.3,544.6" fill="#38ff00"/><polygon points="558.3,544.6 565.3,544.4 565.5,551.4 558.5,551.6" fill="#38ff00"/><polygon points="558.5,551.6 565.5,551.4 565.7,558.4 558.7,558.6" fill="#38ff00"/><polygon points="558.7,558.6 565.7,558.4 565.9,565.5 558.9,565.7" fill="#38ff00"/><polygon points="564.0,495.4 571.0,495.2 571.2,502.2 564.2,502.4" fill="#38ff00"/><polygon points="564.2,502.4 571.2,502.2 571.4,509.2 564.4,509.4" fill="#38ff00"/><polygon points="564.4,509.4 571.4,509.2 571.6,516.2 564.6,516.4" fill="#38ff00"/><polygon points="564.6,516.4 571.6,516.2 571.8,523.2 564.8,523.4" fill="#38ff00"/><polygon points="564.8,523.4 571.8,523.2 572.0,530.2 565.0,530.4" fill="#38ff00"/><polygon points="565.0,530.4 572.0,530.2 572.2,537.2 565.1,537.4" fill="#38ff00"/><polygon points="565.1,537.4 572.2,537.2 572.4,544.2 565.3,544.4" fill="#38ff00"/><polygon points="565.3,544.4 572.4,544.2 572.6,551.2 565.5,551.4" fill="#38ff00"/><polygon points="565.5,551.4 572.6,551.2 572.7,558.2 565.7,558.4" fill="#38ff00"/><polygon points="565.7,558.4 572.7,558.2 572.9,565.2 565.9,565.5" fill="#38ff00"/><polygon points="571.0,495.2 578.0,495.0 578.2,502.0 571.2,502.2" fill="#38ff00"/><polygon points="571.2,502.2 578.2,502.0 578.4,509.0 571.4,509.2" fill="#38ff00"/><polygon points="571.4,509.2 578.4,509.0 578.6,516.0 571.6,516.2" fill="#38ff00"/><polygon points="571.6,516.2 578.6,516.0 578.8,523.0 571.8,523.2" fill="#38ff00"/><polygon points="571.8,523.2 578.8,523.0 579.0,530.0 572.0,530.2" fill="#38ff00"/><polygon points="572.0,530.2 579.0,530.0 579.2,537.0 572.2,537.2" fill="#38ff00"/><polygon points="572.2,537.2 579.2,537.0 579.4,544.0 572.4,544.2" fill="#38ff00"/><polygon points="572.4,544.2 579.4,544.0 579.6,551.0 572.6,551.2" fill="#38ff00"/><polygon points="572.6,551.2 579.6,551.0 579.8,558.0 572.7,558.2" fill="#38ff00"/><polygon points="572.7,558.2 579.8,558.0 580.0,565.0 572.9,565.2" fill="#38ff00"/><polygon points="578.2,502.0 585.2,501.8 585.4,508.8 578.4,509.0" fill="#78ff00"/><polygon points="578.4,509.0 585.4,508.8 585.6,515.8 578.6,516.0" fill="#78ff00"/><polygon points="578.6,516.0 585.6,515.8 585.8,522.8 578.8,523.0" fill="#38ff00"/><polygon points="578.8,523.0 585.8,522.8 586.0,529.8 579.0,530.0" fill="#38ff00"/><polygon points="579.0,530.0 586.0,529.8 586.2,536.8 579.2,537.0" fill="#38ff00"/><polygon points="579.2,537.0 586.2,536.8 586.4,543.8 579.4,544.0" fill="#38ff00"/><polygon points="579.4,544.0 586.4,543.8 586.6,550.8 579.6,551.0" fill="#38ff00"/><polygon points="579.6,551.0 586.6,550.8 586.8,557.8 579.8,558.0" fill="#38ff00"/><polygon points="579.8,558.0 586.8,557.8 587.0,564.8 580.0,565.0" fill="#38ff00"/><polygon points="580.0,565.0 587.0,564.8 587.2,571.9 580.1,572.1" fill="#38ff00"/><polygon points="585.2,501.8 592.3,501.6 592.4,508.6 585.4,508.8" fill="#78ff00"/><polygon points="585.4,508.8 592.4,508.6 592.6,515.6 585.6,515.8" fill="#78ff00"/><polygon points="585.6,515.8 592.6,515.6 592.8,522.6 585.8,522.8" fill="#38ff00"/><polygon points="585.8,522.8 592.8,522.6 593.0,529.6 586.0,529.8" fill="#38ff00"/><polygon points="586.0,529.8 593.0,529.6 593.2,536.6 586.2,536.8" fill="#38ff00"/><polygon points="586.2,536.8 593.2,536.6 593.4,543.6 586.4,543.8" fill="#38ff00"/><polygon points="586.4,543.8 593.4,543.6 593.6,550.6 586.6,550.8" fill="#38ff00"/><polygon points="586.6,550.8 593.6,550.6 593.8,557.6 586.8,557.8" fill="#38ff00"/><polygon points="586.8,557.8 593.8,557.6 594.0,564.6 587.0,564.8" fill="#38ff00"/><polygon points="587.0,564.8 594.0,564.6 594.2,571.6 587.2,571.9" fill="#38ff00"/></g></g>
<g clip-path="url(#vl)"><g clip-path="url(#b4)"><polygon points="537.5,552.2 544.5,552.0 544.7,559.1 537.7,559.3" fill="#38ff00"/><polygon points="544.5,552.0 551.5,551.8 551.7,558.8 544.7,559.1" fill="#38ff00"/><polygon points="544.7,559.1 551.7,558.8 551.9,565.9 544.9,566.1" fill="#38ff00"/><polygon points="544.9,566.1 551.9,565.9 552.1,572.9 545.1,573.1" fill="#00ff8c"/><polygon points="545.1,573.1 552.1,572.9 552.3,579.9 545.3,580.1" fill="#0096ff"/><polygon points="551.7,558.8 558.7,558.6 558.9,565.7 551.9,565.9" fill="#78ff00"/><polygon points="551.9,565.9 558.9,565.7 559.1,572.7 552.1,572.9" fill="#78ff00"/><polygon points="552.1,572.9 559.1,572.7 559.3,579.7 552.3,579.9" fill="#78ff00"/><polygon points="552.3,579.9 559.3,579.7 559.5,586.7 552.5,586.9" fill="#0096ff"/><polygon points="558.7,558.6 565.7,558.4 565.9,565.5 558.9,565.7" fill="#78ff00"/><polygon points="558.9,565.7 565.9,565.5 566.1,572.5 559.1,572.7" fill="#78ff00"/><polygon points="559.1,572.7 566.1,572.5 566.3,579.5 559.3,579.7" fill="#78ff00"/><polygon points="559.3,579.7 566.3,579.5 566.5,586.5 559.5,586.7" fill="#38ff00"/><polygon points="559.5,586.7 566.5,586.5 566.7,593.5 559.7,593.7" fill="#0050ff"/><polygon points="565.7,558.4 572.7,558.2 572.9,565.2 565.9,565.5" fill="#78ff00"/><polygon points="565.9,565.5 572.9,565.2 573.1,572.3 566.1,572.5" fill="#78ff00"/><polygon points="566.1,572.5 573.1,572.3 573.3,579.3 566.3,579.5" fill="#78ff00"/><polygon points="566.3,579.5 573.3,579.3 573.5,586.3 566.5,586.5" fill="#78ff00"/><polygon points="566.5,586.5 573.5,586.3 573.7,593.3 566.7,593.5" fill="#00e6ff"/><polygon points="572.7,558.2 579.8,558.0 580.0,565.0 572.9,565.2" fill="#38ff00"/><polygon points="572.9,565.2 580.0,565.0 580.1,572.1 573.1,572.3" fill="#38ff00"/><polygon points="573.1,572.3 580.1,572.1 580.3,579.1 573.3,579.3" fill="#38ff00"/><polygon points="573.3,579.3 580.3,579.1 580.5,586.1 573.5,586.3" fill="#38ff00"/><polygon points="573.5,586.3 580.5,586.1 580.7,593.1 573.7,593.3" fill="#0096ff"/><polygon points="580.0,565.0 587.0,564.8 587.2,571.9 580.1,572.1" fill="#38ff00"/><polygon points="580.1,572.1 587.2,571.9 587.4,578.9 580.3,579.1" fill="#38ff00"/><polygon points="580.3,579.1 587.4,578.9 587.6,585.9 580.5,586.1" fill="#00ff8c"/><polygon points="580.5,586.1 587.6,585.9 587.7,592.9 580.7,593.1" fill="#0050ff"/><polygon points="587.0,564.8 594.0,564.6 594.2,571.6 587.2,571.9" fill="#38ff00"/><polygon points="587.2,571.9 594.2,571.6 594.4,578.7 587.4,578.9" fill="#38ff00"/><polygon points="587.4,578.9 594.4,578.7 594.6,585.7 587.6,585.9" fill="#00ff8c"/><polygon points="587.6,585.9 594.6,585.7 594.8,592.7 587.7,592.9" fill="#0050ff"/><polygon points="587.7,592.9 594.8,592.7 595.0,599.7 587.9,599.9" fill="#0050ff"/></g></g>
<g clip-path="url(#vr)"><g clip-path="url(#b5)"><polygon points="584.1,459.8 591.1,459.6 591.3,466.6 584.3,466.8" fill="#38ff00"/><polygon points="584.3,466.8 591.3,466.6 591.5,473.6 584.5,473.8" fill="#38ff00"/><polygon points="584.5,473.8 591.5,473.6 591.7,480.6 584.7,480.8" fill="#78ff00"/><polygon points="584.7,480.8 591.7,480.6 591.9,487.6 584.9,487.8" fill="#78ff00"/><polygon points="584.9,487.8 591.9,487.6 592.1,494.6 585.0,494.8" fill="#78ff00"/><polygon points="585.0,494.8 592.1,494.6 592.3,501.6 585.2,501.8" fill="#78ff00"/><polygon points="585.2,501.8 592.3,501.6 592.4,508.6 585.4,508.8" fill="#78ff00"/><polygon points="591.3,466.6 598.3,466.4 598.5,473.4 591.5,473.6" fill="#38ff00"/><polygon points="591.5,473.6 598.5,473.4 598.7,480.4 591.7,480.6" fill="#38ff00"/><polygon points="591.7,480.6 598.7,480.4 598.9,487.4 591.9,487.6" fill="#78ff00"/><polygon points="591.9,487.6 598.9,487.4 599.1,494.4 592.1,494.6" fill="#78ff00"/><polygon points="592.1,494.6 599.1,494.4 599.3,501.4 592.3,501.6" fill="#78ff00"/><polygon points="592.3,501.6 599.3,501.4 599.5,508.4 592.4,508.6" fill="#38ff00"/><polygon points="592.4,508.6 599.5,508.4 599.7,515.4 592.6,515.6" fill="#38ff00"/><polygon points="598.1,459.4 605.1,459.2 605.3,466.2 598.3,466.4" fill="#0050ff"/><polygon points="598.3,466.4 605.3,466.2 605.5,473.2 598.5,473.4" fill="#78ff00"/><polygon points="598.5,473.4 605.5,473.2 605.7,480.2 598.7,480.4" fill="#38ff00"/><polygon points="598.7,480.4 605.7,480.2 605.9,487.2 598.9,487.4" fill="#78ff00"/><polygon points="598.9,487.4 605.9,487.2 606.1,494.2 599.1,494.4" fill="#38ff00"/><polygon points="599.1,494.4 606.1,494.2 606.3,501.2 599.3,501.4" fill="#38ff00"/><polygon points="599.3,501.4 606.3,501.2 606.5,508.2 599.5,508.4" fill="#78ff00"/><polygon points="599.5,508.4 606.5,508.2 606.7,515.2 599.7,515.4" fill="#78ff00"/><polygon points="605.1,459.2 612.2,459.0 612.4,466.0 605.3,466.2" fill="#0050ff"/><polygon points="605.3,466.2 612.4,466.0 612.5,473.0 605.5,473.2" fill="#38ff00"/><polygon points="605.5,473.2 612.5,473.0 612.7,480.0 605.7,480.2" fill="#38ff00"/><polygon points="605.7,480.2 612.7,480.0 612.9,487.0 605.9,487.2" fill="#38ff00"/><polygon points="605.9,487.2 612.9,487.0 613.1,494.0 606.1,494.2" fill="#38ff00"/><polygon points="606.1,494.2 613.1,494.0 613.3,501.0 606.3,501.2" fill="#38ff00"/><polygon points="606.3,501.2 613.3,501.0 613.5,508.0 606.5,508.2" fill="#38ff00"/><polygon points="606.5,508.2 613.5,508.0 613.7,515.0 606.7,515.2" fill="#78ff00"/><polygon points="612.2,459.0 619.2,458.8 619.4,465.8 612.4,466.0" fill="#0050ff"/><polygon points="612.4,466.0 619.4,465.8 619.6,472.8 612.5,473.0" fill="#38ff00"/><polygon points="612.5,473.0 619.6,472.8 619.8,479.8 612.7,480.0" fill="#78ff00"/><polygon points="612.7,480.0 619.8,479.8 619.9,486.8 612.9,487.0" fill="#38ff00"/><polygon points="612.9,487.0 619.9,486.8 620.1,493.8 613.1,494.0" fill="#78ff00"/><polygon points="613.1,494.0 620.1,493.8 620.3,500.8 613.3,501.0" fill="#38ff00"/><polygon points="613.3,501.0 620.3,500.8 620.5,507.8 613.5,508.0" fill="#78ff00"/><polygon points="613.5,508.0 620.5,507.8 620.7,514.8 613.7,515.0" fill="#78ff00"/><polygon points="613.7,515.0 620.7,514.8 620.9,521.8 613.9,522.0" fill="#78ff00"/><polygon points="619.2,458.8 626.2,458.6 626.4,465.6 619.4,465.8" fill="#0096ff"/><polygon points="619.4,465.8 626.4,465.6 626.6,472.6 619.6,472.8" fill="#78ff00"/><polygon points="619.6,472.8 626.6,472.6 626.8,479.6 619.8,479.8" fill="#78ff00"/><polygon points="619.8,479.8 626.8,479.6 627.0,486.6 619.9,486.8" fill="#38ff00"/><polygon points="619.9,486.8 627.0,486.6 627.2,493.6 620.1,493.8" fill="#78ff00"/><polygon points="620.1,493.8 627.2,493.6 627.4,500.6 620.3,500.8" fill="#78ff00"/><polygon points="620.3,500.8 627.4,500.6 627.5,507.6 620.5,507.8" fill="#78ff00"/><polygon points="620.5,507.8 627.5,507.6 627.7,514.6 620.7,514.8" fill="#fff500"/><polygon points="620.7,514.8 627.7,514.6 627.9,521.6 620.9,521.8" fill="#78ff00"/><polygon points="626.2,458.6 633.2,458.4 633.4,465.4 626.4,465.6" fill="#00e6ff"/><polygon points="626.4,465.6 633.4,465.4 633.6,472.4 626.6,472.6" fill="#78ff00"/><polygon points="626.6,472.6 633.6,472.4 633.8,479.4 626.8,479.6" fill="#78ff00"/><polygon points="626.8,479.6 633.8,479.4 634.0,486.4 627.0,486.6" fill="#beff00"/><polygon points="627.0,486.6 634.0,486.4 634.2,493.4 627.2,493.6" fill="#78ff00"/><polygon points="627.2,493.6 634.2,493.4 634.4,500.4 627.4,500.6" fill="#78ff00"/><polygon points="627.4,500.6 634.4,500.4 634.6,507.4 627.5,507.6" fill="#78ff00"/><polygon points="627.5,507.6 634.6,507.4 634.8,514.4 627.7,514.6" fill="#fff500"/><polygon points="627.7,514.6 634.8,514.4 634.9,521.4 627.9,521.6" fill="#fff500"/><polygon points="627.9,521.6 634.9,521.4 635.1,528.4 628.1,528.6" fill="#fff500"/><polygon points="633.2,458.4 640.2,458.2 640.4,465.2 633.4,465.4" fill="#00e6ff"/><polygon points="633.4,465.4 640.4,465.2 640.6,472.2 633.6,472.4" fill="#78ff00"/><polygon points="633.6,472.4 640.6,472.2 640.8,479.2 633.8,479.4" fill="#78ff00"/><polygon points="633.8,479.4 640.8,479.2 641.0,486.2 634.0,486.4" fill="#fff500"/><polygon points="634.0,486.4 641.0,486.2 641.2,493.2 634.2,493.4" fill="#ffd200"/><polygon points="634.2,493.4 641.2,493.2 641.4,500.2 634.4,500.4" fill="#ffd200"/><polygon points="634.4,500.4 641.4,500.2 641.6,507.2 634.6,507.4" fill="#ffd200"/><polygon points="634.6,507.4 641.6,507.2 641.8,514.2 634.8,514.4" fill="#ffd200"/><polygon points="634.8,514.4 641.8,514.2 642.0,521.2 634.9,521.4" fill="#fff500"/><polygon points="634.9,521.4 642.0,521.2 642.2,528.2 635.1,528.4" fill="#fff500"/><polygon points="640.2,458.2 647.3,458.0 647.5,465.0 640.4,465.2" fill="#0050ff"/><polygon points="640.4,465.2 647.5,465.0 647.6,472.0 640.6,472.2" fill="#fff500"/><polygon points="640.6,472.2 647.6,472.0 647.8,479.0 640.8,479.2" fill="#ffd200"/><polygon points="640.8,479.2 647.8,479.0 648.0,486.0 641.0,486.2" fill="#fff500"/><polygon points="641.0,486.2 648.0,486.0 648.2,493.0 641.2,493.2" fill="#ffd200"/><polygon points="641.2,493.2 648.2,493.0 648.4,500.0 641.4,500.2" fill="#fff500"/><polygon points="641.4,500.2 648.4,500.0 648.6,507.0 641.6,507.2" fill="#fff500"/><polygon points="641.6,507.2 648.6,507.0 648.8,514.0 641.8,514.2" fill="#fff500"/><polygon points="641.8,514.2 648.8,514.0 649.0,521.0 642.0,521.2" fill="#fff500"/><polygon points="642.0,521.2 649.0,521.0 649.2,528.0 642.2,528.2" fill="#fff500"/><polygon points="647.8,479.0 654.9,478.8 655.0,485.8 648.0,486.0" fill="#ffd200"/><polygon points="649.0,521.0 656.0,520.8 656.2,527.8 649.2,528.0" fill="#78ff00"/><polygon points="656.2,527.8 663.2,527.6 663.4,534.6 656.4,534.8" fill="#78ff00"/></g></g>
<g clip-path="url(#vr)"><g clip-path="url(#b6)"><polygon points="585.2,501.8 592.3,501.6 592.4,508.6 585.4,508.8" fill="#78ff00"/><polygon points="585.4,508.8 592.4,508.6 592.6,515.6 585.6,515.8" fill="#78ff00"/><polygon points="585.6,515.8 592.6,515.6 592.8,522.6 585.8,522.8" fill="#38ff00"/><polygon points="585.8,522.8 592.8,522.6 593.0,529.6 586.0,529.8" fill="#38ff00"/><polygon points="586.0,529.8 593.0,529.6 593.2,536.6 586.2,536.8" fill="#38ff00"/><polygon points="586.2,536.8 593.2,536.6 593.4,543.6 586.4,543.8" fill="#38ff00"/><polygon points="586.4,543.8 593.4,543.6 593.6,550.6 586.6,550.8" fill="#38ff00"/><polygon points="586.6,550.8 593.6,550.6 593.8,557.6 586.8,557.8" fill="#38ff00"/><polygon points="586.8,557.8 593.8,557.6 594.0,564.6 587.0,564.8" fill="#38ff00"/><polygon points="587.0,564.8 594.0,564.6 594.2,571.6 587.2,571.9" fill="#38ff00"/><polygon points="592.3,501.6 599.3,501.4 599.5,508.4 592.4,508.6" fill="#78ff00"/><polygon points="592.4,508.6 599.5,508.4 599.7,515.4 592.6,515.6" fill="#78ff00"/><polygon points="592.6,515.6 599.7,515.4 599.9,522.4 592.8,522.6" fill="#78ff00"/><polygon points="592.8,522.6 599.9,522.4 600.0,529.4 593.0,529.6" fill="#38ff00"/><polygon points="593.0,529.6 600.0,529.4 600.2,536.4 593.2,536.6" fill="#38ff00"/><polygon points="593.2,536.6 600.2,536.4 600.4,543.4 593.4,543.6" fill="#38ff00"/><polygon points="593.4,543.6 600.4,543.4 600.6,550.4 593.6,550.6" fill="#38ff00"/><polygon points="593.6,550.6 600.6,550.4 600.8,557.4 593.8,557.6" fill="#78ff00"/><polygon points="593.8,557.6 600.8,557.4 601.0,564.4 594.0,564.6" fill="#78ff00"/><polygon points="599.5,508.4 606.5,508.2 606.7,515.2 599.7,515.4" fill="#78ff00"/><polygon points="599.7,515.4 606.7,515.2 606.9,522.2 599.9,522.4" fill="#78ff00"/><polygon points="599.9,522.4 606.9,522.2 607.1,529.2 600.0,529.4" fill="#78ff00"/><polygon points="600.0,529.4 607.1,529.2 607.3,536.2 600.2,536.4" fill="#78ff00"/><polygon points="600.2,536.4 607.3,536.2 607.4,543.2 600.4,543.4" fill="#78ff00"/><polygon points="600.4,543.4 607.4,543.2 607.6,550.2 600.6,550.4" fill="#78ff00"/><polygon points="600.6,550.4 607.6,550.2 607.8,557.2 600.8,557.4" fill="#78ff00"/><polygon points="600.8,557.4 607.8,557.2 608.0,564.2 601.0,564.4" fill="#78ff00"/><polygon points="601.0,564.4 608.0,564.2 608.2,571.2 601.2,571.4" fill="#78ff00"/><polygon points="606.5,508.2 613.5,508.0 613.7,515.0 606.7,515.2" fill="#78ff00"/><polygon points="606.7,515.2 613.7,515.0 613.9,522.0 606.9,522.2" fill="#78ff00"/><polygon points="606.9,522.2 613.9,522.0 614.1,529.0 607.1,529.2" fill="#78ff00"/><polygon points="607.1,529.2 614.1,529.0 614.3,536.0 607.3,536.2" fill="#78ff00"/><polygon points="607.3,536.2 614.3,536.0 614.5,543.0 607.4,543.2" fill="#78ff00"/><polygon points="607.4,543.2 614.5,543.0 614.7,550.0 607.6,550.2" fill="#78ff00"/><polygon points="607.6,550.2 614.7,550.0 614.9,557.0 607.8,557.2" fill="#78ff00"/><polygon points="607.8,557.2 614.9,557.0 615.0,564.0 608.0,564.2" fill="#78ff00"/><polygon points="608.0,564.2 615.0,564.0 615.2,571.0 608.2,571.2" fill="#78ff00"/><polygon points="608.2,571.2 615.2,571.0 615.4,578.0 608.4,578.3" fill="#78ff00"/><polygon points="613.7,515.0 620.7,514.8 620.9,521.8 613.9,522.0" fill="#78ff00"/><polygon points="613.9,522.0 620.9,521.8 621.1,528.8 614.1,529.0" fill="#78ff00"/><polygon points="614.1,529.0 621.1,528.8 621.3,535.8 614.3,536.0" fill="#78ff00"/><polygon points="614.3,536.0 621.3,535.8 621.5,542.8 614.5,543.0" fill="#78ff00"/><polygon points="614.5,543.0 621.5,542.8 621.7,549.8 614.7,550.0" fill="#78ff00"/><polygon points="614.7,550.0 621.7,549.8 621.9,556.8 614.9,557.0" fill="#78ff00"/><polygon points="614.9,557.0 621.9,556.8 622.1,563.8 615.0,564.0" fill="#78ff00"/><polygon points="615.0,564.0 622.1,563.8 622.3,570.8 615.2,571.0" fill="#78ff00"/><polygon points="615.2,571.0 622.3,570.8 622.4,577.8 615.4,578.0" fill="#78ff00"/><polygon points="620.7,514.8 627.7,514.6 627.9,521.6 620.9,521.8" fill="#78ff00"/><polygon points="620.9,521.8 627.9,521.6 628.1,528.6 621.1,528.8" fill="#78ff00"/><polygon points="621.1,528.8 628.1,528.6 628.3,535.6 621.3,535.8" fill="#78ff00"/><polygon points="621.3,535.8 628.3,535.6 628.5,542.6 621.5,542.8" fill="#78ff00"/><polygon points="621.5,542.8 628.5,542.6 628.7,549.6 621.7,549.8" fill="#fff500"/><polygon points="621.7,549.8 628.7,549.6 628.9,556.6 621.9,556.8" fill="#78ff00"/><polygon points="621.9,556.8 628.9,556.6 629.1,563.6 622.1,563.8" fill="#78ff00"/><polygon points="622.1,563.8 629.1,563.6 629.3,570.6 622.3,570.8" fill="#78ff00"/><polygon points="622.3,570.8 629.3,570.6 629.5,577.6 622.4,577.8" fill="#78ff00"/><polygon points="627.7,514.6 634.8,514.4 634.9,521.4 627.9,521.6" fill="#fff500"/><polygon points="627.9,521.6 634.9,521.4 635.1,528.4 628.1,528.6" fill="#fff500"/><polygon points="628.1,528.6 635.1,528.4 635.3,535.4 628.3,535.6" fill="#fff500"/><polygon points="628.3,535.6 635.3,535.4 635.5,542.4 628.5,542.6" fill="#78ff00"/><polygon points="628.5,542.6 635.5,542.4 635.7,549.4 628.7,549.6" fill="#78ff00"/><polygon points="628.7,549.6 635.7,549.4 635.9,556.4 628.9,556.6" fill="#fff500"/><polygon points="628.9,556.6 635.9,556.4 636.1,563.4 629.1,563.6" fill="#78ff00"/><polygon points="629.1,563.6 636.1,563.4 636.3,570.4 629.3,570.6" fill="#78ff00"/><polygon points="629.3,570.6 636.3,570.4 636.5,577.4 629.5,577.6" fill="#78ff00"/><polygon points="634.9,521.4 642.0,521.2 642.2,528.2 635.1,528.4" fill="#beff00"/><polygon points="635.1,528.4 642.2,528.2 642.3,535.2 635.3,535.4" fill="#ffd200"/><polygon points="635.3,535.4 642.3,535.2 642.5,542.2 635.5,542.4" fill="#ffd200"/><polygon points="635.5,542.4 642.5,542.2 642.7,549.2 635.7,549.4" fill="#ffd200"/><polygon points="635.7,549.4 642.7,549.2 642.9,556.2 635.9,556.4" fill="#ffd200"/><polygon points="635.9,556.4 642.9,556.2 643.1,563.2 636.1,563.4" fill="#ffd200"/><polygon points="636.1,563.4 643.1,563.2 643.3,570.2 636.3,570.4" fill="#fff500"/><polygon points="636.3,570.4 643.3,570.2 643.5,577.2 636.5,577.4" fill="#78ff00"/><polygon points="636.5,577.4 643.5,577.2 643.7,584.2 636.7,584.4" fill="#78ff00"/><polygon points="642.0,521.2 649.0,521.0 649.2,528.0 642.2,528.2" fill="#fff500"/><polygon points="642.2,528.2 649.2,528.0 649.4,535.0 642.3,535.2" fill="#fff500"/><polygon points="642.3,535.2 649.4,535.0 649.6,542.0 642.5,542.2" fill="#ffd200"/><polygon points="642.5,542.2 649.6,542.0 649.7,549.0 642.7,549.2" fill="#ffd200"/><polygon points="642.7,549.2 649.7,549.0 649.9,556.0 642.9,556.2" fill="#fff500"/><polygon points="642.9,556.2 649.9,556.0 650.1,563.0 643.1,563.2" fill="#fff500"/><polygon points="643.1,563.2 650.1,563.0 650.3,570.0 643.3,570.2" fill="#fff500"/><polygon points="643.3,570.2 650.3,570.0 650.5,577.0 643.5,577.2" fill="#fff500"/><polygon points="643.5,577.2 650.5,577.0 650.7,584.0 643.7,584.2" fill="#fff500"/><polygon points="649.0,521.0 656.0,520.8 656.2,527.8 649.2,528.0" fill="#fff500"/><polygon points="649.4,535.0 656.4,534.8 656.6,541.8 649.6,542.0" fill="#fff500"/><polygon points="649.6,542.0 656.6,541.8 656.8,548.8 649.7,549.0" fill="#fff500"/><polygon points="649.7,549.0 656.8,548.8 657.0,555.8 649.9,556.0" fill="#fff500"/><polygon points="649.9,556.0 657.0,555.8 657.1,562.8 650.1,563.0" fill="#fff500"/></g></g>
<g clip-path="url(#vr)"><g clip-path="url(#b7)"><polygon points="615.2,571.0 622.3,570.8 622.4,577.8 615.4,578.0" fill="#0050ff"/><polygon points="622.3,570.8 629.3,570.6 629.5,577.6 622.4,577.8" fill="#00ff8c"/><polygon points="622.4,577.8 629.5,577.6 629.7,584.6 622.6,584.9" fill="#00ff8c"/><polygon points="622.6,584.9 629.7,584.6 629.8,591.7 622.8,591.9" fill="#0050ff"/><polygon points="629.3,570.6 636.3,570.4 636.5,577.4 629.5,577.6" fill="#78ff00"/><polygon points="629.5,577.6 636.5,577.4 636.7,584.4 629.7,584.6" fill="#78ff00"/><polygon points="629.7,584.6 636.7,584.4 636.9,591.4 629.8,591.7" fill="#00ff8c"/><polygon points="636.5,577.4 643.5,577.2 643.7,584.2 636.7,584.4" fill="#0096ff"/><polygon points="636.7,584.4 643.7,584.2 643.9,591.2 636.9,591.4" fill="#78ff00"/><polygon points="636.9,591.4 643.9,591.2 644.1,598.3 637.1,598.5" fill="#0096ff"/><polygon points="643.5,577.2 650.5,577.0 650.7,584.0 643.7,584.2" fill="#beff00"/><polygon points="643.7,584.2 650.7,584.0 650.9,591.0 643.9,591.2" fill="#fff500"/><polygon points="643.9,591.2 650.9,591.0 651.1,598.0 644.1,598.3" fill="#00e6ff"/><polygon points="650.5,577.0 657.5,576.8 657.7,583.8 650.7,584.0" fill="#beff00"/></g></g>
<path d="M266.00 146.00L283.00 742.00M273.03 145.81L290.01 741.79M280.05 145.62L297.03 741.59M287.08 145.42L304.04 741.38M294.11 145.23L311.05 741.18M301.14 145.04L318.07 740.97M308.16 144.85L325.08 740.77M315.19 144.66L332.10 740.56M322.22 144.47L339.11 740.36M329.25 144.27L346.12 740.15M336.27 144.08L353.14 739.95M343.30 143.89L360.15 739.74M350.33 143.70L367.16 739.53M357.36 143.51L374.18 739.33M364.38 143.32L381.19 739.12M371.41 143.12L388.21 738.92M378.44 142.93L395.22 738.71M385.47 142.74L402.23 738.51M392.49 142.55L409.25 738.30M399.52 142.36L416.26 738.10M406.55 142.16L423.27 737.89M413.58 141.97L430.29 737.68M420.60 141.78L437.30 737.48M427.63 141.59L444.32 737.27M434.66 141.40L451.33 737.07M441.68 141.21L458.34 736.86M448.71 141.01L465.36 736.66M455.74 140.82L472.37 736.45M462.77 140.63L479.38 736.25M469.79 140.44L486.40 736.04M476.82 140.25L493.41 735.84M483.85 140.05L500.42 735.63M490.88 139.86L507.44 735.42M497.90 139.67L514.45 735.22M504.93 139.48L521.47 735.01M511.96 139.29L528.48 734.81M518.99 139.10L535.49 734.60M526.01 138.90L542.51 734.40M533.04 138.71L549.52 734.19M540.07 138.52L556.53 733.99M547.10 138.33L563.55 733.78M554.12 138.14L570.56 733.58M561.15 137.95L577.58 733.37M568.18 137.75L584.59 733.16M575.21 137.56L591.60 732.96M582.23 137.37L598.62 732.75M589.26 137.18L605.63 732.55M596.29 136.99L612.64 732.34M603.32 136.79L619.66 732.14M610.34 136.60L626.67 731.93M617.37 136.41L633.68 731.73M624.40 136.22L640.70 731.52M631.42 136.03L647.71 731.32M638.45 135.84L654.73 731.11M645.48 135.64L661.74 730.90M652.51 135.45L668.75 730.70M659.53 135.26L675.77 730.49M666.56 135.07L682.78 730.29M673.59 134.88L689.79 730.08M680.62 134.68L696.81 729.88M687.64 134.49L703.82 729.67M694.67 134.30L710.84 729.47M701.70 134.11L717.85 729.26M708.73 133.92L724.86 729.05M715.75 133.73L731.88 728.85M722.78 133.53L738.89 728.64M729.81 133.34L745.90 728.44M736.84 133.15L752.92 728.23M743.86 132.96L759.93 728.03M750.89 132.77L766.95 727.82M757.92 132.58L773.96 727.62M764.95 132.38L780.97 727.41M771.97 132.19L787.99 727.21M779.00 132.00L795.00 727.00M266.00 146.00L779.00 132.00M266.20 153.01L779.19 139.00M266.40 160.02L779.38 146.00M266.60 167.04L779.56 153.00M266.80 174.05L779.75 160.00M267.00 181.06L779.94 167.00M267.20 188.07L780.13 174.00M267.40 195.08L780.32 181.00M267.60 202.09L780.51 188.00M267.80 209.11L780.69 195.00M268.00 216.12L780.88 202.00M268.20 223.13L781.07 209.00M268.40 230.14L781.26 216.00M268.60 237.15L781.45 223.00M268.80 244.16L781.64 230.00M269.00 251.18L781.82 237.00M269.20 258.19L782.01 244.00M269.40 265.20L782.20 251.00M269.60 272.21L782.39 258.00M269.80 279.22L782.58 265.00M270.00 286.24L782.76 272.00M270.20 293.25L782.95 279.00M270.40 300.26L783.14 286.00M270.60 307.27L783.33 293.00M270.80 314.28L783.52 300.00M271.00 321.29L783.71 307.00M271.20 328.31L783.89 314.00M271.40 335.32L784.08 321.00M271.60 342.33L784.27 328.00M271.80 349.34L784.46 335.00M272.00 356.35L784.65 342.00M272.20 363.36L784.84 349.00M272.40 370.38L785.02 356.00M272.60 377.39L785.21 363.00M272.80 384.40L785.40 370.00M273.00 391.41L785.59 377.00M273.20 398.42L785.78 384.00M273.40 405.44L785.96 391.00M273.60 412.45L786.15 398.00M273.80 419.46L786.34 405.00M274.00 426.47L786.53 412.00M274.20 433.48L786.72 419.00M274.40 440.49L786.91 426.00M274.60 447.51L787.09 433.00M274.80 454.52L787.28 440.00M275.00 461.53L787.47 447.00M275.20 468.54L787.66 454.00M275.40 475.55L787.85 461.00M275.60 482.56L788.04 468.00M275.80 489.58L788.22 475.00M276.00 496.59L788.41 482.00M276.20 503.60L788.60 489.00M276.40 510.61L788.79 496.00M276.60 517.62L788.98 503.00M276.80 524.64L789.16 510.00M277.00 531.65L789.35 517.00M277.20 538.66L789.54 524.00M277.40 545.67L789.73 531.00M277.60 552.68L789.92 538.00M277.80 559.69L790.11 545.00M278.00 566.71L790.29 552.00M278.20 573.72L790.48 559.00M278.40 580.73L790.67 566.00M278.60 587.74L790.86 573.00M278.80 594.75L791.05 580.00M279.00 601.76L791.24 587.00M279.20 608.78L791.42 594.00M279.40 615.79L791.61 601.00M279.60 622.80L791.80 608.00M279.80 629.81L791.99 615.00M280.00 636.82L792.18 622.00M280.20 643.84L792.36 629.00M280.40 650.85L792.55 636.00M280.60 657.86L792.74 643.00M280.80 664.87L792.93 650.00M281.00 671.88L793.12 657.00M281.20 678.89L793.31 664.00M281.40 685.91L793.49 671.00M281.60 692.92L793.68 678.00M281.80 699.93L793.87 685.00M282.00 706.94L794.06 692.00M282.20 713.95L794.25 699.00M282.40 720.96L794.44 706.00M282.60 727.98L794.62 713.00M282.80 734.99L794.81 720.00M283.00 742.00L795.00 727.00" stroke="#000" stroke-width="1.8" stroke-opacity="0.3" fill="none"/>
<path d="M266.00 146.00L283.00 742.00M273.03 145.81L290.01 741.79M280.05 145.62L297.03 741.59M287.08 145.42L304.04 741.38M294.11 145.23L311.05 741.18M301.14 145.04L318.07 740.97M308.16 144.85L325.08 740.77M315.19 144.66L332.10 740.56M322.22 144.47L339.11 740.36M329.25 144.27L346.12 740.15M336.27 144.08L353.14 739.95M343.30 143.89L360.15 739.74M350.33 143.70L367.16 739.53M357.36 143.51L374.18 739.33M364.38 143.32L381.19 739.12M371.41 143.12L388.21 738.92M378.44 142.93L395.22 738.71M385.47 142.74L402.23 738.51M392.49 142.55L409.25 738.30M399.52 142.36L416.26 738.10M406.55 142.16L423.27 737.89M413.58 141.97L430.29 737.68M420.60 141.78L437.30 737.48M427.63 141.59L444.32 737.27M434.66 141.40L451.33 737.07M441.68 141.21L458.34 736.86M448.71 141.01L465.36 736.66M455.74 140.82L472.37 736.45M462.77 140.63L479.38 736.25M469.79 140.44L486.40 736.04M476.82 140.25L493.41 735.84M483.85 140.05L500.42 735.63M490.88 139.86L507.44 735.42M497.90 139.67L514.45 735.22M504.93 139.48L521.47 735.01M511.96 139.29L528.48 734.81M518.99 139.10L535.49 734.60M526.01 138.90L542.51 734.40M533.04 138.71L549.52 734.19M540.07 138.52L556.53 733.99M547.10 138.33L563.55 733.78M554.12 138.14L570.56 733.58M561.15 137.95L577.58 733.37M568.18 137.75L584.59 733.16M575.21 137.56L591.60 732.96M582.23 137.37L598.62 732.75M589.26 137.18L605.63 732.55M596.29 136.99L612.64 732.34M603.32 136.79L619.66 732.14M610.34 136.60L626.67 731.93M617.37 136.41L633.68 731.73M624.40 136.22L640.70 731.52M631.42 136.03L647.71 731.32M638.45 135.84L654.73 731.11M645.48 135.64L661.74 730.90M652.51 135.45L668.75 730.70M659.53 135.26L675.77 730.49M666.56 135.07L682.78 730.29M673.59 134.88L689.79 730.08M680.62 134.68L696.81 729.88M687.64 134.49L703.82 729.67M694.67 134.30L710.84 729.47M701.70 134.11L717.85 729.26M708.73 133.92L724.86 729.05M715.75 133.73L731.88 728.85M722.78 133.53L738.89 728.64M729.81 133.34L745.90 728.44M736.84 133.15L752.92 728.23M743.86 132.96L759.93 728.03M750.89 132.77L766.95 727.82M757.92 132.58L773.96 727.62M764.95 132.38L780.97 727.41M771.97 132.19L787.99 727.21M779.00 132.00L795.00 727.00M266.00 146.00L779.00 132.00M266.20 153.01L779.19 139.00M266.40 160.02L779.38 146.00M266.60 167.04L779.56 153.00M266.80 174.05L779.75 160.00M267.00 181.06L779.94 167.00M267.20 188.07L780.13 174.00M267.40 195.08L780.32 181.00M267.60 202.09L780.51 188.00M267.80 209.11L780.69 195.00M268.00 216.12L780.88 202.00M268.20 223.13L781.07 209.00M268.40 230.14L781.26 216.00M268.60 237.15L781.45 223.00M268.80 244.16L781.64 230.00M269.00 251.18L781.82 237.00M269.20 258.19L782.01 244.00M269.40 265.20L782.20 251.00M269.60 272.21L782.39 258.00M269.80 279.22L782.58 265.00M270.00 286.24L782.76 272.00M270.20 293.25L782.95 279.00M270.40 300.26L783.14 286.00M270.60 307.27L783.33 293.00M270.80 314.28L783.52 300.00M271.00 321.29L783.71 307.00M271.20 328.31L783.89 314.00M271.40 335.32L784.08 321.00M271.60 342.33L784.27 328.00M271.80 349.34L784.46 335.00M272.00 356.35L784.65 342.00M272.20 363.36L784.84 349.00M272.40 370.38L785.02 356.00M272.60 377.39L785.21 363.00M272.80 384.40L785.40 370.00M273.00 391.41L785.59 377.00M273.20 398.42L785.78 384.00M273.40 405.44L785.96 391.00M273.60 412.45L786.15 398.00M273.80 419.46L786.34 405.00M274.00 426.47L786.53 412.00M274.20 433.48L786.72 419.00M274.40 440.49L786.91 426.00M274.60 447.51L787.09 433.00M274.80 454.52L787.28 440.00M275.00 461.53L787.47 447.00M275.20 468.54L787.66 454.00M275.40 475.55L787.85 461.00M275.60 482.56L788.04 468.00M275.80 489.58L788.22 475.00M276.00 496.59L788.41 482.00M276.20 503.60L788.60 489.00M276.40 510.61L788.79 496.00M276.60 517.62L788.98 503.00M276.80 524.64L789.16 510.00M277.00 531.65L789.35 517.00M277.20 538.66L789.54 524.00M277.40 545.67L789.73 531.00M277.60 552.68L789.92 538.00M277.80 559.69L790.11 545.00M278.00 566.71L790.29 552.00M278.20 573.72L790.48 559.00M278.40 580.73L790.67 566.00M278.60 587.74L790.86 573.00M278.80 594.75L791.05 580.00M279.00 601.76L791.24 587.00M279.20 608.78L791.42 594.00M279.40 615.79L791.61 601.00M279.60 622.80L791.80 608.00M279.80 629.81L791.99 615.00M280.00 636.82L792.18 622.00M280.20 643.84L792.36 629.00M280.40 650.85L792.55 636.00M280.60 657.86L792.74 643.00M280.80 664.87L792.93 650.00M281.00 671.88L793.12 657.00M281.20 678.89L793.31 664.00M281.40 685.91L793.49 671.00M281.60 692.92L793.68 678.00M281.80 699.93L793.87 685.00M282.00 706.94L794.06 692.00M282.20 713.95L794.25 699.00M282.40 720.96L794.44 706.00M282.60 727.98L794.62 713.00M282.80 734.99L794.81 720.00M283.00 742.00L795.00 727.00" stroke="#000" stroke-width="1" fill="none" shape-rendering="crispEdges"/>
<g><path d="M267.0 148.0 L281.0 161.0 L298.0 171.5 L317.0 180.0 L332.0 189.6 L340.0 192.4 L355.0 195.2 L368.0 198.7 L372.0 199.0" stroke="#000" stroke-width="2.60" fill="none" stroke-linejoin="round" stroke-linecap="butt"/><path d="M306.5 146.3 L326.5 156.3" stroke="#000" stroke-width="3.04" fill="none" stroke-linejoin="round" stroke-linecap="butt"/><path d="M326.5 156.3 L355.0 170.6" stroke="#000" stroke-width="3.53" fill="none" stroke-linejoin="round" stroke-linecap="butt"/><path d="M355.0 170.6 L383.4 187.7" stroke="#000" stroke-width="4.01" fill="none" stroke-linejoin="round" stroke-linecap="butt"/><path d="M383.4 187.7 L412.0 204.7" stroke="#000" stroke-width="4.50" fill="none" stroke-linejoin="round" stroke-linecap="butt"/><path d="M412.0 204.7 L440.0 219.0" stroke="#000" stroke-width="4.99" fill="none" stroke-linejoin="round" stroke-linecap="butt"/><path d="M440.0 219.0 L468.0 233.0" stroke="#000" stroke-width="5.47" fill="none" stroke-linejoin="round" stroke-linecap="butt"/><path d="M468.0 233.0 L496.5 251.0" stroke="#000" stroke-width="5.96" fill="none" stroke-linejoin="round" stroke-linecap="butt"/><path d="M496.5 251.0 L530.6 272.0 L543.9 284.0 L572.4 299.2 L606.6 313.0 L639.2 324.9 L664.7 337.6 L692.2 343.5 L721.6 352.4" stroke="#000" stroke-width="6.40" fill="none" stroke-linejoin="round" stroke-linecap="butt"/><path d="M721.6 352.4 L751.0 366.1 L770.6 373.9 L785.3 375.9" stroke="#000" stroke-width="4.00" fill="none" stroke-linejoin="round" stroke-linecap="butt"/><path d="M400.5 160.1 L430.0 169.0 L468.0 179.8" stroke="#000" stroke-width="1.70" fill="none" stroke-linejoin="round" stroke-linecap="butt"/><path d="M468.0 179.8 L496.5 191.2 L524.9 207.3 L543.9 222.5 L562.9 237.7 L585.7 254.8 L613.0 275.9" stroke="#000" stroke-width="2.60" fill="none" stroke-linejoin="round" stroke-linecap="butt"/><path d="M269.5 239.0 L279.0 246.5 L298.0 258.9 L324.6 278.8 L335.9 287.1 L364.4 308.0 L392.9 328.9 L411.9 340.2 L440.0 354.5" stroke="#000" stroke-width="1.70" fill="none" stroke-linejoin="round" stroke-linecap="butt"/><path d="M440.0 354.5 L468.0 367.5 L506.0 386.5" stroke="#000" stroke-width="2.60" fill="none" stroke-linejoin="round" stroke-linecap="butt"/><path d="M506.0 386.5 L543.9 403.6 L558.4 408.3 L590.7 423.5" stroke="#000" stroke-width="3.00" fill="none" stroke-linejoin="round" stroke-linecap="butt"/><path d="M354.0 239.0 L373.9 254.1 L389.1 268.3 L411.9 281.4 L440.0 298.5 L458.5 312.5 L496.5 335.2" stroke="#000" stroke-width="2.60" fill="none" stroke-linejoin="round" stroke-linecap="butt"/><path d="M496.5 335.2 L524.9 350.4 L562.9 369.4 L594.2 387.5" stroke="#000" stroke-width="3.00" fill="none" stroke-linejoin="round" stroke-linecap="butt"/><path d="M450.9 142.4 L487.0 150.4 L524.9 158.9" stroke="#000" stroke-width="2.60" fill="none" stroke-linejoin="round" stroke-linecap="butt"/><path d="M524.9 158.9 L545.0 164.0" stroke="#000" stroke-width="2.57" fill="none" stroke-linejoin="round" stroke-linecap="butt"/><path d="M545.0 164.0 L562.9 169.4" stroke="#000" stroke-width="2.86" fill="none" stroke-linejoin="round" stroke-linecap="butt"/><path d="M562.9 169.4 L578.0 174.0" stroke="#000" stroke-width="3.27" fill="none" stroke-linejoin="round" stroke-linecap="butt"/><path d="M578.0 174.0 L591.4 178.9" stroke="#000" stroke-width="3.77" fill="none" stroke-linejoin="round" stroke-linecap="butt"/><path d="M591.4 178.9 L602.0 182.0" stroke="#000" stroke-width="4.36" fill="none" stroke-linejoin="round" stroke-linecap="butt"/><path d="M602.0 182.0 L610.0 184.5" stroke="#000" stroke-width="5.01" fill="none" stroke-linejoin="round" stroke-linecap="butt"/><path d="M610.0 184.5 L621.0 187.5" stroke="#000" stroke-width="5.72" fill="none" stroke-linejoin="round" stroke-linecap="butt"/><path d="M621.0 187.5 L632.5 190.6" stroke="#000" stroke-width="6.49" fill="none" stroke-linejoin="round" stroke-linecap="butt"/><path d="M634.5 189.6 L660.0 196.7 L695.3 202.5 L733.5 210.0" stroke="#000" stroke-width="3.00" fill="none" stroke-linejoin="round" stroke-linecap="butt"/><path d="M733.5 210.0 L779.6 217.8" stroke="#000" stroke-width="2.60" fill="none" stroke-linejoin="round" stroke-linecap="butt"/><path d="M643.5 136.7 L638.4 170.0 L634.5 189.6" stroke="#000" stroke-width="3.00" fill="none" stroke-linejoin="round" stroke-linecap="butt"/><path d="M632.5 191.6 L629.0 213.0" stroke="#000" stroke-width="5.00" fill="none" stroke-linejoin="round" stroke-linecap="butt"/><path d="M629.0 213.0 L623.5 241.6 L616.9 272.0 L605.1 311.2" stroke="#000" stroke-width="3.00" fill="none" stroke-linejoin="round" stroke-linecap="butt"/><path d="M616.9 272.0 L671.6 299.4 L698.0 311.2" stroke="#000" stroke-width="2.60" fill="none" stroke-linejoin="round" stroke-linecap="butt"/><path d="M710.6 134.9 L696.3 201.6 L687.5 230.0 L677.5 280.0 L672.5 299.4 L664.7 336.7 L658.8 372.0 L652.5 420.0" stroke="#000" stroke-width="3.00" fill="none" stroke-linejoin="round" stroke-linecap="butt"/><path d="M652.5 420.0 L651.8 431.8 L650.3 478.8 L650.0 526.9 L650.0 570.0 L650.6 634.3 L653.6 677.2 L662.2 729.7" stroke="#000" stroke-width="4.00" fill="none" stroke-linejoin="round" stroke-linecap="butt"/><path d="M733.5 210.0 L720.8 237.8 L709.8 270.0 L698.0 311.2 L694.1 342.5" stroke="#000" stroke-width="3.00" fill="none" stroke-linejoin="round" stroke-linecap="butt"/><path d="M743.3 196.7 L736.5 209.4" stroke="#000" stroke-width="1.50" fill="none" stroke-linejoin="round" stroke-linecap="butt"/><path d="M781.6 275.1 L766.7 319.0 L751.0 366.1 L741.2 420.0 L738.2 446.5 L735.3 498.4 L735.3 541.6 L736.1 570.0 L745.8 634.3 L760.8 727.6" stroke="#000" stroke-width="3.00" fill="none" stroke-linejoin="round" stroke-linecap="butt"/><path d="M592.6 414.0 L615.0 419.7 L651.0 427.0 L678.4 436.7 L711.8 444.5 L738.2 447.5 L766.7 452.4 L786.3 453.3" stroke="#000" stroke-width="3.00" fill="none" stroke-linejoin="round" stroke-linecap="butt"/><path d="M785.3 408.0 L780.4 430.0 L778.4 453.3 L774.5 498.4 L773.5 543.5 L774.7 570.0 L780.1 634.3 L794.0 726.5" stroke="#000" stroke-width="3.00" fill="none" stroke-linejoin="round" stroke-linecap="butt"/><path d="M734.3 301.4 L712.7 430.0 L709.8 478.8 L706.9 537.6 L705.0 570.0 L706.1 612.9 L716.8 625.7 L724.3 666.5 L732.9 728.6" stroke="#000" stroke-width="1.50" fill="none" stroke-linejoin="round" stroke-linecap="butt"/><path d="M612.7 211.2 L629.4 215.1 L658.8 223.9 L688.2 229.8 L718.8 237.8 L747.0 243.5 L780.6 251.2" stroke="#000" stroke-width="1.70" fill="none" stroke-linejoin="round" stroke-linecap="butt"/><path d="M608.5 310.6 L595.2 386.5" stroke="#000" stroke-width="1.50" fill="none" stroke-linejoin="round" stroke-linecap="butt"/><path d="M595.2 386.5 L591.4 420.0 L589.5 460.0" stroke="#000" stroke-width="3.00" fill="none" stroke-linejoin="round" stroke-linecap="butt"/><path d="M589.5 460.0 L588.8 470.9 L586.9 501.3 L587.0 550.0 L589.4 600.0 L589.4 632.0" stroke="#000" stroke-width="1.70" fill="none" stroke-linejoin="round" stroke-linecap="butt"/><path d="M271.8 308.0 L288.5 315.6 L317.0 334.6 L354.9 357.3 L392.9 380.1 L440.0 410.5 L473.0 431.1" stroke="#000" stroke-width="3.00" fill="none" stroke-linejoin="round" stroke-linecap="butt"/><path d="M473.0 431.1 L511.0 453.9" stroke="#000" stroke-width="2.60" fill="none" stroke-linejoin="round" stroke-linecap="butt"/><path d="M511.0 453.9 L548.9 474.7 L586.9 495.6" stroke="#000" stroke-width="1.70" fill="none" stroke-linejoin="round" stroke-linecap="butt"/><path d="M273.7 383.9 L298.0 399.1 L326.5 412.4 L358.7 424.9 L369.4 430.2 L407.4 443.5 L445.0 455.8 L473.0 465.2 L511.0 480.4 L548.9 491.8 L586.9 505.1 L615.0 515.6 L647.0 526.9 L678.4 531.8 L706.9 537.6 L735.3 542.5 L772.5 545.5 L789.2 547.5" stroke="#000" stroke-width="1.70" fill="none" stroke-linejoin="round" stroke-linecap="butt"/><path d="M276.4 461.5 L303.0 475.8 L341.0 492.8 L378.9 506.1 L416.9 520.4 L445.0 528.9 L473.0 537.4 L511.0 550.0 L550.0 559.0 L600.0 569.0 L649.0 580.0" stroke="#000" stroke-width="1.70" fill="none" stroke-linejoin="round" stroke-linecap="butt"/><path d="M278.3 510.9 L312.5 525.1 L350.4 540.3 L378.9 553.6 L409.3 570.0 L445.0 585.0 L479.1 598.5 L523.2 615.0 L574.0 638.2" stroke="#000" stroke-width="1.70" fill="none" stroke-linejoin="round" stroke-linecap="butt"/><path d="M340.0 589.6 L367.6 569.4" stroke="#000" stroke-width="1.50" fill="none" stroke-linejoin="round" stroke-linecap="butt"/><path d="M501.8 385.5 L468.7 429.6" stroke="#000" stroke-width="1.50" fill="none" stroke-linejoin="round" stroke-linecap="butt"/><path d="M533.0 433.3 L501.8 477.5 L461.4 534.5 L432.0 575.0 L398.8 604.3 L358.4 624.6" stroke="#000" stroke-width="1.50" fill="none" stroke-linejoin="round" stroke-linecap="butt"/><path d="M514.7 549.2 L476.1 597.0 L435.6 637.4 L402.5 666.9" stroke="#000" stroke-width="1.50" fill="none" stroke-linejoin="round" stroke-linecap="butt"/><path d="M527.6 615.4 L507.3 650.3" stroke="#000" stroke-width="1.50" fill="none" stroke-linejoin="round" stroke-linecap="butt"/><path d="M573.5 565.7 L553.3 586.0" stroke="#000" stroke-width="1.50" fill="none" stroke-linejoin="round" stroke-linecap="butt"/><path d="M589.4 621.7 L620.0 641.2" stroke="#000" stroke-width="1.50" fill="none" stroke-linejoin="round" stroke-linecap="butt"/></g>
<g><path d="M267.0 148.0 L281.0 161.0 L298.0 171.5 L317.0 180.0 L332.0 189.6 L340.0 192.4 L355.0 195.2 L368.0 198.7 L372.0 199.0" stroke="#b0544a" stroke-width="1.30" fill="none" stroke-linejoin="round" stroke-linecap="butt"/><path d="M306.5 146.3 L326.5 156.3" stroke="#c8554c" stroke-width="1.84" fill="none" stroke-linejoin="round" stroke-linecap="round"/><path d="M326.5 156.3 L355.0 170.6" stroke="#c8554c" stroke-width="2.33" fill="none" stroke-linejoin="round" stroke-linecap="round"/><path d="M355.0 170.6 L383.4 187.7" stroke="#c8554c" stroke-width="2.81" fill="none" stroke-linejoin="round" stroke-linecap="round"/><path d="M383.4 187.7 L412.0 204.7" stroke="#c8554c" stroke-width="3.30" fill="none" stroke-linejoin="round" stroke-linecap="round"/><path d="M412.0 204.7 L440.0 219.0" stroke="#c8554c" stroke-width="3.79" fill="none" stroke-linejoin="round" stroke-linecap="round"/><path d="M440.0 219.0 L468.0 233.0" stroke="#c8554c" stroke-width="4.27" fill="none" stroke-linejoin="round" stroke-linecap="round"/><path d="M468.0 233.0 L496.5 251.0" stroke="#c8554c" stroke-width="4.76" fill="none" stroke-linejoin="round" stroke-linecap="round"/><path d="M496.5 251.0 L530.6 272.0 L543.9 284.0 L572.4 299.2 L606.6 313.0 L639.2 324.9 L664.7 337.6 L692.2 343.5 L721.6 352.4" stroke="#c8554c" stroke-width="5.00" fill="none" stroke-linejoin="round" stroke-linecap="butt"/><path d="M721.6 352.4 L751.0 366.1 L770.6 373.9 L785.3 375.9" stroke="#c8554c" stroke-width="2.80" fill="none" stroke-linejoin="round" stroke-linecap="butt"/><path d="M400.5 160.1 L430.0 169.0 L468.0 179.8" stroke="#6a3a30" stroke-width="0.50" fill="none" stroke-linejoin="round" stroke-linecap="butt"/><path d="M468.0 179.8 L496.5 191.2 L524.9 207.3 L543.9 222.5 L562.9 237.7 L585.7 254.8 L613.0 275.9" stroke="#b0544a" stroke-width="1.30" fill="none" stroke-linejoin="round" stroke-linecap="butt"/><path d="M269.5 239.0 L279.0 246.5 L298.0 258.9 L324.6 278.8 L335.9 287.1 L364.4 308.0 L392.9 328.9 L411.9 340.2 L440.0 354.5" stroke="#6a3a30" stroke-width="0.50" fill="none" stroke-linejoin="round" stroke-linecap="butt"/><path d="M440.0 354.5 L468.0 367.5 L506.0 386.5" stroke="#b0544a" stroke-width="1.30" fill="none" stroke-linejoin="round" stroke-linecap="butt"/><path d="M506.0 386.5 L543.9 403.6 L558.4 408.3 L590.7 423.5" stroke="#c8564c" stroke-width="1.90" fill="none" stroke-linejoin="round" stroke-linecap="butt"/><path d="M354.0 239.0 L373.9 254.1 L389.1 268.3 L411.9 281.4 L440.0 298.5 L458.5 312.5 L496.5 335.2" stroke="#b0544a" stroke-width="1.30" fill="none" stroke-linejoin="round" stroke-linecap="butt"/><path d="M496.5 335.2 L524.9 350.4 L562.9 369.4 L594.2 387.5" stroke="#c8564c" stroke-width="1.90" fill="none" stroke-linejoin="round" stroke-linecap="butt"/><path d="M450.9 142.4 L487.0 150.4 L524.9 158.9" stroke="#b0544a" stroke-width="1.30" fill="none" stroke-linejoin="round" stroke-linecap="butt"/><path d="M524.9 158.9 L545.0 164.0" stroke="#c8554c" stroke-width="1.37" fill="none" stroke-linejoin="round" stroke-linecap="round"/><path d="M545.0 164.0 L562.9 169.4" stroke="#c8554c" stroke-width="1.66" fill="none" stroke-linejoin="round" stroke-linecap="round"/><path d="M562.9 169.4 L578.0 174.0" stroke="#c8554c" stroke-width="2.07" fill="none" stroke-linejoin="round" stroke-linecap="round"/><path d="M578.0 174.0 L591.4 178.9" stroke="#c8554c" stroke-width="2.57" fill="none" stroke-linejoin="round" stroke-linecap="round"/><path d="M591.4 178.9 L602.0 182.0" stroke="#c8554c" stroke-width="3.16" fill="none" stroke-linejoin="round" stroke-linecap="round"/><path d="M602.0 182.0 L610.0 184.5" stroke="#c8554c" stroke-width="3.81" fill="none" stroke-linejoin="round" stroke-linecap="round"/><path d="M610.0 184.5 L621.0 187.5" stroke="#c8554c" stroke-width="4.52" fill="none" stroke-linejoin="round" stroke-linecap="round"/><path d="M621.0 187.5 L632.5 190.6" stroke="#c8554c" stroke-width="5.29" fill="none" stroke-linejoin="round" stroke-linecap="round"/><path d="M634.5 189.6 L660.0 196.7 L695.3 202.5 L733.5 210.0" stroke="#c8564c" stroke-width="1.90" fill="none" stroke-linejoin="round" stroke-linecap="butt"/><path d="M733.5 210.0 L779.6 217.8" stroke="#b0544a" stroke-width="1.30" fill="none" stroke-linejoin="round" stroke-linecap="butt"/><path d="M643.5 136.7 L638.4 170.0 L634.5 189.6" stroke="#c8564c" stroke-width="1.90" fill="none" stroke-linejoin="round" stroke-linecap="butt"/><path d="M632.5 191.6 L629.0 213.0" stroke="#c8554c" stroke-width="3.80" fill="none" stroke-linejoin="round" stroke-linecap="butt"/><path d="M629.0 213.0 L623.5 241.6 L616.9 272.0 L605.1 311.2" stroke="#c8564c" stroke-width="1.90" fill="none" stroke-linejoin="round" stroke-linecap="butt"/><path d="M616.9 272.0 L671.6 299.4 L698.0 311.2" stroke="#b0544a" stroke-width="1.30" fill="none" stroke-linejoin="round" stroke-linecap="butt"/><path d="M710.6 134.9 L696.3 201.6 L687.5 230.0 L677.5 280.0 L672.5 299.4 L664.7 336.7 L658.8 372.0 L652.5 420.0" stroke="#c8564c" stroke-width="1.90" fill="none" stroke-linejoin="round" stroke-linecap="butt"/><path d="M652.5 420.0 L651.8 431.8 L650.3 478.8 L650.0 526.9 L650.0 570.0 L650.6 634.3 L653.6 677.2 L662.2 729.7" stroke="#c8554c" stroke-width="2.80" fill="none" stroke-linejoin="round" stroke-linecap="butt"/><path d="M733.5 210.0 L720.8 237.8 L709.8 270.0 L698.0 311.2 L694.1 342.5" stroke="#c8564c" stroke-width="1.90" fill="none" stroke-linejoin="round" stroke-linecap="butt"/><path d="M781.6 275.1 L766.7 319.0 L751.0 366.1 L741.2 420.0 L738.2 446.5 L735.3 498.4 L735.3 541.6 L736.1 570.0 L745.8 634.3 L760.8 727.6" stroke="#c8564c" stroke-width="1.90" fill="none" stroke-linejoin="round" stroke-linecap="butt"/><path d="M592.6 414.0 L615.0 419.7 L651.0 427.0 L678.4 436.7 L711.8 444.5 L738.2 447.5 L766.7 452.4 L786.3 453.3" stroke="#c8564c" stroke-width="1.90" fill="none" stroke-linejoin="round" stroke-linecap="butt"/><path d="M785.3 408.0 L780.4 430.0 L778.4 453.3 L774.5 498.4 L773.5 543.5 L774.7 570.0 L780.1 634.3 L794.0 726.5" stroke="#c8564c" stroke-width="1.90" fill="none" stroke-linejoin="round" stroke-linecap="butt"/><path d="M612.7 211.2 L629.4 215.1 L658.8 223.9 L688.2 229.8 L718.8 237.8 L747.0 243.5 L780.6 251.2" stroke="#6a3a30" stroke-width="0.50" fill="none" stroke-linejoin="round" stroke-linecap="butt"/><path d="M595.2 386.5 L591.4 420.0 L589.5 460.0" stroke="#c8564c" stroke-width="1.90" fill="none" stroke-linejoin="round" stroke-linecap="butt"/><path d="M589.5 460.0 L588.8 470.9 L586.9 501.3 L587.0 550.0 L589.4 600.0 L589.4 632.0" stroke="#6a3a30" stroke-width="0.50" fill="none" stroke-linejoin="round" stroke-linecap="butt"/><path d="M271.8 308.0 L288.5 315.6 L317.0 334.6 L354.9 357.3 L392.9 380.1 L440.0 410.5 L473.0 431.1" stroke="#c8564c" stroke-width="1.90" fill="none" stroke-linejoin="round" stroke-linecap="butt"/><path d="M473.0 431.1 L511.0 453.9" stroke="#b0544a" stroke-width="1.30" fill="none" stroke-linejoin="round" stroke-linecap="butt"/><path d="M511.0 453.9 L548.9 474.7 L586.9 495.6" stroke="#6a3a30" stroke-width="0.50" fill="none" stroke-linejoin="round" stroke-linecap="butt"/><path d="M273.7 383.9 L298.0 399.1 L326.5 412.4 L358.7 424.9 L369.4 430.2 L407.4 443.5 L445.0 455.8 L473.0 465.2 L511.0 480.4 L548.9 491.8 L586.9 505.1 L615.0 515.6 L647.0 526.9 L678.4 531.8 L706.9 537.6 L735.3 542.5 L772.5 545.5 L789.2 547.5" stroke="#6a3a30" stroke-width="0.50" fill="none" stroke-linejoin="round" stroke-linecap="butt"/><path d="M276.4 461.5 L303.0 475.8 L341.0 492.8 L378.9 506.1 L416.9 520.4 L445.0 528.9 L473.0 537.4 L511.0 550.0 L550.0 559.0 L600.0 569.0 L649.0 580.0" stroke="#6a3a30" stroke-width="0.50" fill="none" stroke-linejoin="round" stroke-linecap="butt"/><path d="M278.3 510.9 L312.5 525.1 L350.4 540.3 L378.9 553.6 L409.3 570.0 L445.0 585.0 L479.1 598.5 L523.2 615.0 L574.0 638.2" stroke="#6a3a30" stroke-width="0.50" fill="none" stroke-linejoin="round" stroke-linecap="butt"/></g>
</svg>
<svg width="1049" height="60" style="position:absolute;left:0;top:0">
<path d="M3.5 26 V2.5 H81" stroke="#ababab" stroke-width="1" fill="none"/>
<rect x="81" y="0" width="100" height="28" fill="#0072c6"/>
<rect x="2" y="26" width="1044" height="2" fill="#0065c1"/>
<rect x="3" y="52" width="1042" height="1" fill="#d4d4d4"/>
<g stroke="#0a74d0" stroke-width="1.0" fill="none" stroke-linejoin="round"><path d="M21.5 6.5 L28 10 L28 18 L21.5 21.5 L15 18 L15 10 Z"/><path d="M15 10 L21.5 13.5 L28 10 M21.5 13.5 L21.5 21.5"/><path d="M18.2 8.2 L24.7 11.8 M24.8 8.2 L18.2 11.8 M18.2 11.8 V19.8 M24.8 11.8 V19.8 M15 14 L21.5 17.5 L28 14"/></g>
<text x="33" y="17.5" font-family='Liberation Sans',sans-serif font-size="10.3" fill="#555555">3D View</text>
<rect x="94.0" y="6.0" width="4" height="4" fill="#fff"/>
<rect x="99.0" y="6.0" width="4" height="4" fill="#fff"/>
<rect x="104.0" y="6.0" width="4" height="4" fill="#fff"/>
<rect x="94.0" y="11.0" width="4" height="4" fill="#fff"/>
<rect x="99.0" y="11.0" width="4" height="4" fill="#fff"/>
<rect x="104.0" y="11.0" width="4" height="4" fill="#fff"/>
<rect x="94.0" y="16.0" width="4" height="4" fill="#fff"/>
<rect x="99.0" y="16.0" width="4" height="4" fill="#fff"/>
<rect x="104.0" y="16.0" width="4" height="4" fill="#fff"/>
<text x="112.5" y="17" font-family='Liberation Sans',sans-serif font-size="10" fill="#fff">2D View</text>
<path d="M163.5 10.5 L171 17 M171 10.5 L163.5 17" stroke="#fff" stroke-width="1.6"/>
<path d="M1032.5 10 L1040.5 10 L1036.5 14.5 Z" fill="#6e6e6e"/>
<rect x="54.0" y="28" width="1" height="23" fill="#707070"/>
<rect x="275.0" y="28" width="1" height="23" fill="#707070"/>
<rect x="360.0" y="28" width="1" height="23" fill="#707070"/>
<rect x="413.0" y="28" width="1" height="23" fill="#707070"/>
<rect x="442.0" y="28" width="1" height="23" fill="#707070"/>
<g fill="none"><path d="M11.3 32 V46 M9 43.6 H23" stroke="#444" stroke-width="1.1"/><path d="M15.4 32 V43 M19.6 32 V43 M11.8 35.3 H23 M11.8 39.4 H23" stroke="#0a74d0" stroke-width="1.1"/></g>
<rect x="8.9" y="33.9" width="1" height="1" fill="#777"/>
<rect x="8.9" y="36.9" width="1" height="1" fill="#777"/>
<rect x="8.9" y="39.9" width="1" height="1" fill="#777"/>
<rect x="14.0" y="45.0" width="1" height="1" fill="#777"/>
<rect x="17.0" y="45.0" width="1" height="1" fill="#777"/>
<rect x="20.0" y="45.0" width="1" height="1" fill="#777"/>
<path d="M37.2 34.4 H42.9 M37.2 43.6 H42.9 M35.5 36.2 V41.7 M44.5 36.2 V41.7" stroke="#444" stroke-width="1.1" fill="none"/>
<rect x="33" y="32" width="3" height="3" fill="#0a74d0"/>
<rect x="44" y="32" width="3" height="3" fill="#0a74d0"/>
<rect x="33" y="43" width="3" height="3" fill="#0a74d0"/>
<rect x="44" y="43" width="3" height="3" fill="#0a74d0"/>
<polygon points="68.50,38.40 68.50,31.00 74.91,34.70" fill="#0a74d0"/><polygon points="68.50,38.40 74.91,34.70 74.91,42.10" fill="#3c3c3c"/><polygon points="68.50,38.40 74.91,42.10 68.50,45.80" fill="#3c3c3c"/><polygon points="68.50,38.40 68.50,45.80 62.09,42.10" fill="#3c3c3c"/><polygon points="68.50,38.40 62.09,42.10 62.09,34.70" fill="#3c3c3c"/><polygon points="68.50,38.40 62.09,34.70 68.50,31.00" fill="#0a74d0"/><line x1="68.50" y1="38.40" x2="74.91" y2="34.70" stroke="#fff" stroke-width="1.1"/><line x1="68.50" y1="38.40" x2="74.91" y2="42.10" stroke="#fff" stroke-width="1.1"/><line x1="68.50" y1="38.40" x2="68.50" y2="45.80" stroke="#fff" stroke-width="1.1"/><line x1="68.50" y1="38.40" x2="62.09" y2="42.10" stroke="#fff" stroke-width="1.1"/><line x1="68.50" y1="38.40" x2="62.09" y2="34.70" stroke="#fff" stroke-width="1.1"/>
<polygon points="92.50,38.40 92.50,31.00 98.91,34.70" fill="#3c3c3c"/><polygon points="92.50,38.40 98.91,34.70 98.91,42.10" fill="#3c3c3c"/><polygon points="92.50,38.40 98.91,42.10 92.50,45.80" fill="#0a74d0"/><polygon points="92.50,38.40 92.50,45.80 86.09,42.10" fill="#0a74d0"/><polygon points="92.50,38.40 86.09,42.10 86.09,34.70" fill="#3c3c3c"/><polygon points="92.50,38.40 86.09,34.70 92.50,31.00" fill="#3c3c3c"/><line x1="92.50" y1="38.40" x2="92.50" y2="31.00" stroke="#fff" stroke-width="1.1"/><line x1="92.50" y1="38.40" x2="98.91" y2="34.70" stroke="#fff" stroke-width="1.1"/><line x1="92.50" y1="38.40" x2="98.91" y2="42.10" stroke="#fff" stroke-width="1.1"/><line x1="92.50" y1="38.40" x2="92.50" y2="45.80" stroke="#fff" stroke-width="1.1"/><line x1="92.50" y1="38.40" x2="86.09" y2="42.10" stroke="#fff" stroke-width="1.1"/><line x1="92.50" y1="38.40" x2="86.09" y2="34.70" stroke="#fff" stroke-width="1.1"/>
<polygon points="116.50,38.40 116.50,31.00 122.91,34.70" fill="#3c3c3c"/><polygon points="116.50,38.40 122.91,34.70 122.91,42.10" fill="#3c3c3c"/><polygon points="116.50,38.40 122.91,42.10 116.50,45.80" fill="#3c3c3c"/><polygon points="116.50,38.40 116.50,45.80 110.09,42.10" fill="#3c3c3c"/><polygon points="116.50,38.40 110.09,42.10 110.09,34.70" fill="#0a74d0"/><polygon points="116.50,38.40 110.09,34.70 116.50,31.00" fill="#0a74d0"/><line x1="116.50" y1="38.40" x2="116.50" y2="31.00" stroke="#fff" stroke-width="1.1"/><line x1="116.50" y1="38.40" x2="122.91" y2="34.70" stroke="#fff" stroke-width="1.1"/><line x1="116.50" y1="38.40" x2="122.91" y2="42.10" stroke="#fff" stroke-width="1.1"/><line x1="116.50" y1="38.40" x2="116.50" y2="45.80" stroke="#fff" stroke-width="1.1"/><line x1="116.50" y1="38.40" x2="110.09" y2="42.10" stroke="#fff" stroke-width="1.1"/><line x1="116.50" y1="38.40" x2="110.09" y2="34.70" stroke="#fff" stroke-width="1.1"/>
<polygon points="140.50,38.40 140.50,31.00 146.91,34.70" fill="#3c3c3c"/><polygon points="140.50,38.40 146.91,34.70 146.91,42.10" fill="#0a74d0"/><polygon points="140.50,38.40 146.91,42.10 140.50,45.80" fill="#0a74d0"/><polygon points="140.50,38.40 140.50,45.80 134.09,42.10" fill="#3c3c3c"/><polygon points="140.50,38.40 134.09,42.10 134.09,34.70" fill="#3c3c3c"/><polygon points="140.50,38.40 134.09,34.70 140.50,31.00" fill="#3c3c3c"/><line x1="140.50" y1="38.40" x2="140.50" y2="31.00" stroke="#fff" stroke-width="1.1"/><line x1="140.50" y1="38.40" x2="146.91" y2="34.70" stroke="#fff" stroke-width="1.1"/><line x1="140.50" y1="38.40" x2="140.50" y2="45.80" stroke="#fff" stroke-width="1.1"/><line x1="140.50" y1="38.40" x2="134.09" y2="42.10" stroke="#fff" stroke-width="1.1"/><line x1="140.50" y1="38.40" x2="134.09" y2="34.70" stroke="#fff" stroke-width="1.1"/>
<polygon points="164.50,38.40 164.50,31.00 170.91,34.70" fill="#0a74d0"/><polygon points="164.50,38.40 170.91,34.70 170.91,42.10" fill="#0a74d0"/><polygon points="164.50,38.40 170.91,42.10 164.50,45.80" fill="#3c3c3c"/><polygon points="164.50,38.40 164.50,45.80 158.09,42.10" fill="#3c3c3c"/><polygon points="164.50,38.40 158.09,42.10 158.09,34.70" fill="#3c3c3c"/><polygon points="164.50,38.40 158.09,34.70 164.50,31.00" fill="#3c3c3c"/><line x1="164.50" y1="38.40" x2="164.50" y2="31.00" stroke="#fff" stroke-width="1.1"/><line x1="164.50" y1="38.40" x2="170.91" y2="34.70" stroke="#fff" stroke-width="1.1"/><line x1="164.50" y1="38.40" x2="170.91" y2="42.10" stroke="#fff" stroke-width="1.1"/><line x1="164.50" y1="38.40" x2="164.50" y2="45.80" stroke="#fff" stroke-width="1.1"/><line x1="164.50" y1="38.40" x2="158.09" y2="42.10" stroke="#fff" stroke-width="1.1"/><line x1="164.50" y1="38.40" x2="158.09" y2="34.70" stroke="#fff" stroke-width="1.1"/>
<polygon points="188.50,38.40 188.50,31.00 194.91,34.70" fill="#3c3c3c"/><polygon points="188.50,38.40 194.91,34.70 194.91,42.10" fill="#3c3c3c"/><polygon points="188.50,38.40 194.91,42.10 188.50,45.80" fill="#3c3c3c"/><polygon points="188.50,38.40 188.50,45.80 182.09,42.10" fill="#0a74d0"/><polygon points="188.50,38.40 182.09,42.10 182.09,34.70" fill="#0a74d0"/><polygon points="188.50,38.40 182.09,34.70 188.50,31.00" fill="#3c3c3c"/><line x1="188.50" y1="38.40" x2="188.50" y2="31.00" stroke="#fff" stroke-width="1.1"/><line x1="188.50" y1="38.40" x2="194.91" y2="34.70" stroke="#fff" stroke-width="1.1"/><line x1="188.50" y1="38.40" x2="194.91" y2="42.10" stroke="#fff" stroke-width="1.1"/><line x1="188.50" y1="38.40" x2="188.50" y2="45.80" stroke="#fff" stroke-width="1.1"/><line x1="188.50" y1="38.40" x2="182.09" y2="34.70" stroke="#fff" stroke-width="1.1"/>
<circle cx="210.3" cy="39.6" r="4.3" stroke="#333" stroke-width="2" fill="none"/>
<path d="M213.5 42.8 L216.5 46" stroke="#333" stroke-width="2.6"/>
<circle cx="234.3" cy="39.6" r="4.3" stroke="#333" stroke-width="2" fill="none"/>
<path d="M237.5 42.8 L240.5 46" stroke="#333" stroke-width="2.6"/>
<circle cx="258.3" cy="39.6" r="4.3" stroke="#333" stroke-width="2" fill="none"/>
<path d="M261.5 42.8 L264.5 46" stroke="#333" stroke-width="2.6"/>
<path d="M214.8 34 H221 M217.9 30.8 V37.2" stroke="#0a74d0" stroke-width="1.8"/>
<path d="M239 34 H245" stroke="#0a74d0" stroke-width="1.8"/>
<path d="M268.5 33 A3 3 0 1 1 266.5 30.8" stroke="#e04848" stroke-width="1.4" fill="none"/><path d="M265.5 29 L269 30.5 L266 32.5 Z" fill="#e04848"/>
<path d="M281 36 L285 32 L285 46 L281 48 Z M286.5 32 L290.5 35 L290.5 47.5 L286.5 45 Z M292 35 L296 32 L296 44.5 L292 47.5 Z" fill="#3c3c3c"/>
<path d="M301.5 39 L308 39 L304.75 42 Z" fill="#111"/>
<rect x="314.5" y="35.5" width="14" height="6" stroke="#0a74d0" stroke-width="1.2" fill="none"/><path d="M317.5 41 V38.5 M320.5 41 V38.5 M323.5 41 V38.5 M326.5 41 V38.5" stroke="#0a74d0" stroke-width="1"/>
<path d="M341 34 L351 34 L351 36 L346.4 36 L346.4 44 L341 44 Z" fill="#bfe0fa" opacity="0.9"/>
<path d="M339.5 32.45 H352.5 V37.4 H346.4 M339.5 32.45 V45.4 H346.4" stroke="#0a74d0" stroke-width="1.2" fill="none"/>
<circle cx="339.5" cy="32.5" r="1.25" fill="#fff" stroke="#0a74d0" stroke-width="1.1"/>
<circle cx="352.5" cy="32.5" r="1.25" fill="#fff" stroke="#0a74d0" stroke-width="1.1"/>
<circle cx="352.5" cy="37.4" r="1.25" fill="#fff" stroke="#0a74d0" stroke-width="1.1"/>
<circle cx="339.5" cy="45.4" r="1.25" fill="#fff" stroke="#0a74d0" stroke-width="1.1"/>
<circle cx="346.4" cy="45.4" r="1.25" fill="#fff" stroke="#0a74d0" stroke-width="1.1"/>
<circle cx="346.4" cy="37.4" r="1.25" fill="#fff" stroke="#e04848" stroke-width="1.1"/><path d="M346.4 40 V43.5" stroke="#e04848" stroke-width="1" stroke-dasharray="1 1"/>
<path d="M367 35 H371 L372.5 32.5 H377.5 L379 35 H383 V46 H367 Z" fill="#454545"/><circle cx="375" cy="40.3" r="3.3" fill="none" stroke="#fff" stroke-width="1.2"/><rect x="380" y="36" width="1.5" height="1" fill="#fff"/>
<path d="M391 35 H395 L396.5 32.5 H401.5 L403 35 H407 V38 H400 V46 H391 Z" fill="#454545"/><circle cx="399" cy="40.3" r="3.3" fill="none" stroke="#fff" stroke-width="1.2"/>
<rect x="399.5" y="39.5" width="7" height="7" fill="#fff" stroke="#0a74d0" stroke-width="1.2"/><rect x="401.5" y="43" width="3" height="3" fill="#0a74d0"/>
<path d="M428 46.5 C425 42 422 39 422 36.5 A6 6 0 0 1 434 36.5 C434 39 431 42 428 46.5 Z" fill="#0a74d0"/><circle cx="428" cy="36.5" r="2.3" fill="#fff"/>
<g stroke="#0a74d0" stroke-width="1.4" fill="none"><rect x="447.2" y="34.3" width="9.6" height="5.2" rx="2.4" transform="rotate(45 452 36.9)"/><rect x="453.2" y="40.3" width="9.6" height="5.2" rx="2.4" transform="rotate(45 458 42.9)"/></g>
<path d="M469 39 L475 39 L472 42 Z" fill="#111"/>
</svg>
</div></body></html>
